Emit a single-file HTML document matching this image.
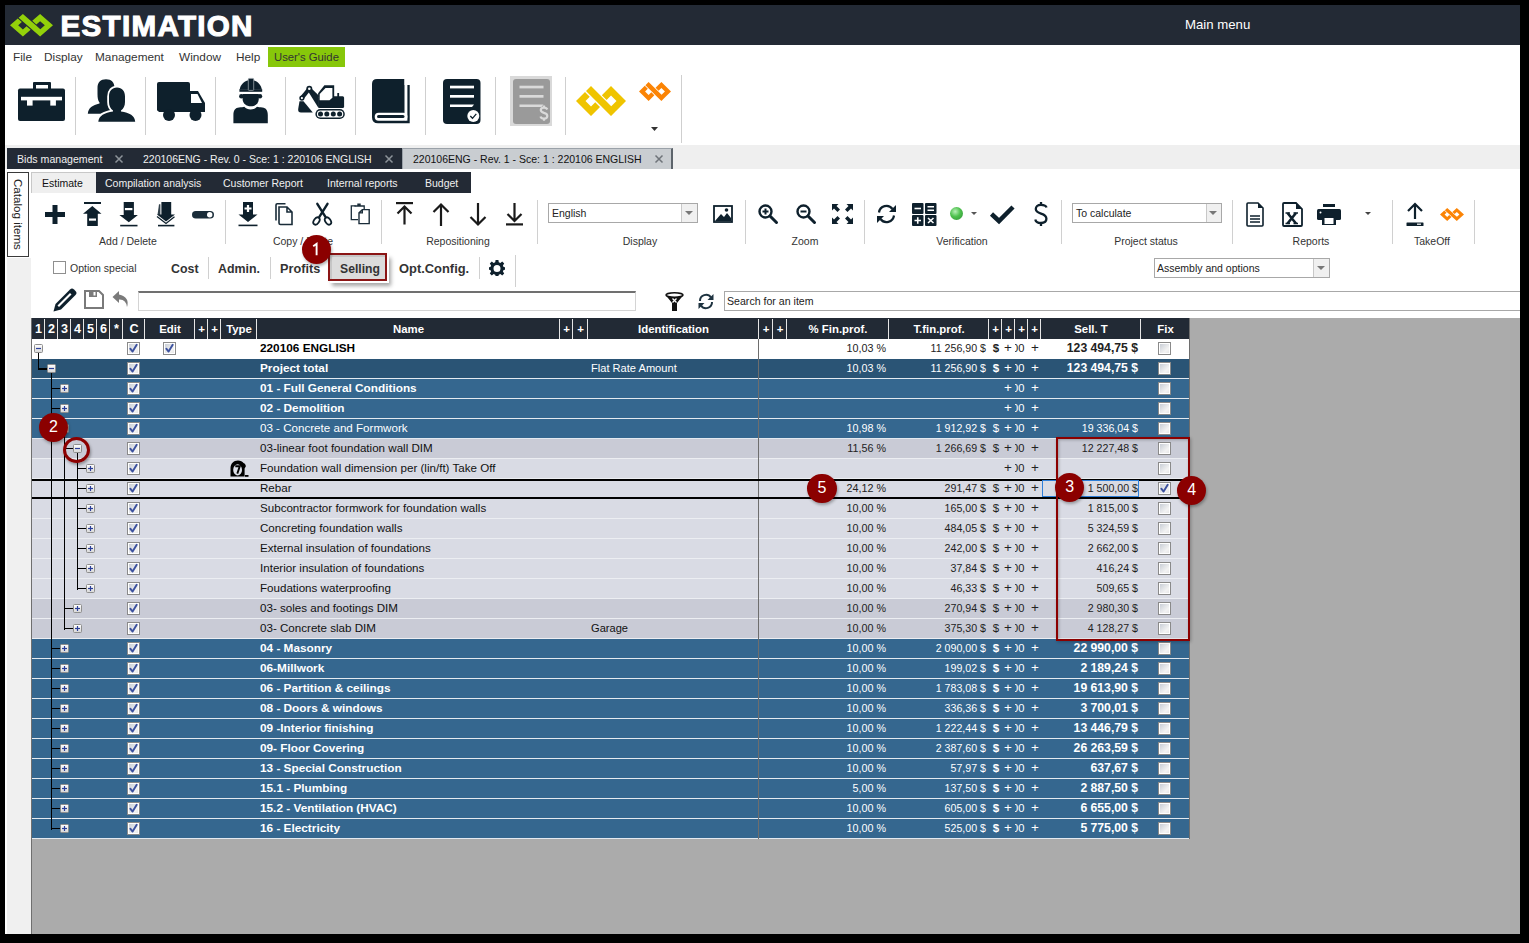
<!DOCTYPE html><html><head><meta charset="utf-8"><style>
html,body{margin:0;padding:0;width:1529px;height:943px;overflow:hidden;background:#000;}
body{position:relative;font-family:"Liberation Sans",sans-serif;}
div{position:absolute;box-sizing:border-box;}
.t{white-space:nowrap;}
</style></head><body>

<div class="" style="left:5px;top:5px;width:1515px;height:929px;background:#fff;"></div>
<div class="" style="left:5px;top:5px;width:1515px;height:40px;background:#232a35;"></div>
<svg style="position:absolute;left:10px;top:14px;overflow:visible;" width="43" height="22.5" viewBox="0 0 50 30" preserveAspectRatio="none"><path fill="#93d10a" d="M24.00 21.00 L19.25 16.25 L15.00 20.50 L9.50 15.00 L13.75 10.75 L9.00 6.00 L0.00 15.00 L15.00 30.00 L24.00 21.00ZM10.00 5.00 L20.00 15.00 L25.00 20.00 L35.00 30.00 L40.00 25.00 L50.00 15.00 L35.00 0.00 L25.85 9.15 L30.60 13.90 L35.00 9.50 L40.50 15.00 L35.25 20.25 L29.75 14.75 L25.00 10.00 L15.00 0.00 L10.00 5.00Z"/></svg>
<div class="t" style="left:60.5px;top:5.5px;font-size:29.6px;font-weight:700;color:#fff;line-height:40px;letter-spacing:1.3px;-webkit-text-stroke:1.1px #fff;">ESTIMATION</div>
<div class="t" style="left:1185px;top:5px;font-size:13.2px;font-weight:400;color:#fff;line-height:40px;">Main menu</div>
<div class="t" style="left:13px;top:47px;font-size:11.8px;font-weight:400;color:#333;line-height:20px;">File</div>
<div class="t" style="left:44px;top:47px;font-size:11.8px;font-weight:400;color:#333;line-height:20px;">Display</div>
<div class="t" style="left:95px;top:47px;font-size:11.8px;font-weight:400;color:#333;line-height:20px;">Management</div>
<div class="t" style="left:179px;top:47px;font-size:11.8px;font-weight:400;color:#333;line-height:20px;">Window</div>
<div class="t" style="left:236px;top:47px;font-size:11.8px;font-weight:400;color:#333;line-height:20px;">Help</div>
<div class="" style="left:268px;top:47px;width:77px;height:20px;background:#87c70a;"></div>
<div class="t" style="left:274px;top:47px;font-size:11.3px;font-weight:400;color:#333;line-height:20px;">User&#x27;s Guide</div>
<div class="" style="left:75px;top:77px;width:1px;height:58px;background:#cfcfcf;"></div>
<div class="" style="left:145px;top:77px;width:1px;height:58px;background:#cfcfcf;"></div>
<div class="" style="left:215px;top:77px;width:1px;height:58px;background:#cfcfcf;"></div>
<div class="" style="left:285px;top:77px;width:1px;height:58px;background:#cfcfcf;"></div>
<div class="" style="left:355px;top:77px;width:1px;height:58px;background:#cfcfcf;"></div>
<div class="" style="left:425px;top:77px;width:1px;height:58px;background:#cfcfcf;"></div>
<div class="" style="left:495px;top:77px;width:1px;height:58px;background:#cfcfcf;"></div>
<div class="" style="left:565px;top:77px;width:1px;height:58px;background:#cfcfcf;"></div>
<div class="" style="left:681px;top:75px;width:1px;height:68px;background:#cfcfcf;"></div>
<svg style="position:absolute;left:18px;top:82px;overflow:visible;" width="47" height="39" viewBox="0 0 47 39"><g fill="#0e202c">
<path d="M15 0 H32 Q33 0 33 1 V7 H30 V3 H18 V7 H15 V1 Q15 0 16 0Z"/>
<rect x="0" y="6.5" width="47" height="32.5" rx="2"/>
</g>
<rect x="3" y="14.8" width="41" height="3.6" fill="#fff"/>
<rect x="9" y="18" width="5.6" height="5.6" fill="#fff"/>
<rect x="32.3" y="18" width="5.6" height="5.6" fill="#fff"/>
</svg>
<svg style="position:absolute;left:87px;top:79px;overflow:visible;" width="49" height="44" viewBox="0 0 49 44"><g fill="#0e202c">
<path d="M19 0.2 C24.5 0.2 27.5 3.5 27.5 9 L27.5 15 C27.5 20 25.5 22.5 23.5 24 L23.5 25 L30 28 L30 34.7 L0.8 34.7 C1.3 29 5.5 26 12.5 24.5 L12.5 23.5 C11 21.5 10.5 19 10.5 15 L10.5 9 C10.5 3.5 13.5 0.2 19 0.2Z"/>
</g>
<path d="M30 8.5 C35 8.5 38 12 38 17.5 L38 23 C38 27 36.5 29.5 34 31.5 L34 32.5 C42.5 33.5 48 37 48.2 42.7 L11.3 42.7 C11.8 37 17.5 33.5 26 32.5 L26 31.5 C23.5 29.5 22 27 22 23 L22 17.5 C22 12 25 8.5 30 8.5Z" fill="#fff" stroke="#fff" stroke-width="3.6"/>
<path d="M30 8.5 C35 8.5 38 12 38 17.5 L38 23 C38 27 36.5 29.5 34 31.5 L34 32.5 C42.5 33.5 48 37 48.2 42.7 L11.3 42.7 C11.8 37 17.5 33.5 26 32.5 L26 31.5 C23.5 29.5 22 27 22 23 L22 17.5 C22 12 25 8.5 30 8.5Z" fill="#0e202c"/></svg>
<svg style="position:absolute;left:157px;top:82px;overflow:visible;" width="49" height="41" viewBox="0 0 49 41"><g fill="#0e202c">
<rect x="0" y="0" width="33" height="29" rx="2"/>
<path d="M32 9 H41 L48 21 V30 H32Z"/>
<path d="M0 24 H48 V30 H2 L0 28Z"/>
<circle cx="12" cy="33.1" r="6"/>
<circle cx="38.5" cy="33.1" r="6"/>
</g>
<path d="M34 12 H40.5 L45 21 H34Z" fill="#fff"/>
</svg>
<svg style="position:absolute;left:233px;top:78px;overflow:visible;" width="36" height="46" viewBox="0 0 36 46"><g fill="#0e202c">
<path d="M6.7 11.6 C7.3 7 10.5 3.5 15.5 2.3 H20.5 C25 3.5 28.2 7 28.8 11.6Z"/>
<rect x="6.4" y="11.2" width="22.8" height="2.6"/>
<circle cx="8.3" cy="18.3" r="2.2"/><circle cx="27" cy="18.3" r="2.2"/>
<path d="M9.6 16 H25.8 V21 C25.8 25.5 22 28.3 17.7 28.3 C13.4 28.3 9.6 25.5 9.6 21Z"/>
<path d="M0.4 45.3 V37 C0.4 32 2.5 30 6 29.6 C8.5 29.3 10 29.1 11.3 28.8 C13 30.6 15 31.4 17.7 31.4 C20.4 31.4 22.4 30.6 24 28.8 C25.3 29.1 27 29.3 29.4 29.6 C33 30 34.8 32.5 34.8 37 V45.3Z"/>
</g>
<rect x="15.3" y="0.4" width="5.4" height="12" rx="0.8" fill="#0e202c" stroke="#9aa3aa" stroke-width="0.8"/>
</svg>
<svg style="position:absolute;left:297px;top:85px;overflow:visible;" width="48" height="35" viewBox="0 0 48 35"><g fill="#0e202c">
<path d="M2.5 16.2 H6.5 L15.8 27.6 H4 Q0.8 27.6 1.2 24 Z"/>
<path d="M3 12 L10.8 2.6 L13.8 5 L6.3 14.4Z"/>
<circle cx="4.9" cy="13.1" r="2.6"/><circle cx="12.3" cy="3.8" r="3"/>
<path d="M10.6 5.5 L14.8 3.8 L21.5 10.2 L21.5 22.9 Z"/>
<path d="M27.4 0.3 H37.2 V12 H21.1 V8.3Z"/>
<rect x="21.1" y="11.2" width="26" height="11.7" rx="1.5"/>
<rect x="40.3" y="8" width="1.8" height="4"/>
<rect x="18.4" y="23.9" width="29.4" height="10.1" rx="5.05"/>
</g>
<path d="M28.5 3 H35.4 V12.8 L32.5 15.2 H22.7 V9.1Z" fill="#fff"/>
<circle cx="4.9" cy="13.1" r="1.1" fill="#fff"/><circle cx="12.3" cy="3.8" r="1.3" fill="#fff"/>
<rect x="19.9" y="25.4" width="26.4" height="7.1" rx="3.55" fill="#fff"/>
<g fill="#0e202c"><circle cx="23.5" cy="29" r="2.5"/><circle cx="29.8" cy="29" r="2.5"/><circle cx="36.3" cy="29" r="2.5"/><circle cx="42.6" cy="29" r="2.5"/></g>
</svg>
<svg style="position:absolute;left:372px;top:79px;overflow:visible;" width="38" height="45" viewBox="0 0 38 45"><path d="M5 0 H32.5 V5.9 H37.7 V44.3 H6 Q0 44.3 0 38.3 V5 Q0 0 5 0Z" fill="#0e202c"/>
<rect x="32.5" y="-1" width="2.9" height="42.7" fill="#fff"/>
<rect x="2.7" y="33.7" width="32.7" height="8" rx="4" fill="#fff"/>
<rect x="5" y="36" width="27.5" height="3.1" rx="1.5" fill="#0e202c"/></svg>
<svg style="position:absolute;left:443px;top:79px;overflow:visible;" width="38" height="45" viewBox="0 0 38 45"><rect x="0" y="0" width="37.5" height="45" rx="4" fill="#0e202c"/>
<g fill="#fff"><rect x="7" y="6.7" width="24" height="2.7"/><rect x="7" y="16" width="24" height="2.7"/><path d="M7 25.5 H31 L29 28 H7Z"/>
<circle cx="30.3" cy="37" r="6"/></g>
<path d="M27.3 37 L29.5 39.3 L33.3 34.8" fill="none" stroke="#0e202c" stroke-width="1.3"/>
</svg>
<div class="" style="left:510px;top:76px;width:42px;height:50px;background:#d9d9d9;"></div>
<svg style="position:absolute;left:513px;top:79px;overflow:visible;" width="37" height="45" viewBox="0 0 37 45"><rect x="0" y="0" width="37" height="45" rx="3" fill="#9a9a9a"/>
<g fill="#dadada"><rect x="6.5" y="6.7" width="24" height="2.7"/><rect x="6.5" y="16" width="24" height="2.7"/><path d="M6.5 25.5 H30.5 L28.5 28 H6.5Z"/></g>
<path d="M34.3 30.5 C33.8 29.2 32.6 28.6 31 28.6 C29 28.6 27.8 29.6 27.8 31.1 C27.8 32.8 29.4 33.4 31 33.9 C32.8 34.4 34.3 35.1 34.3 37 C34.3 38.7 32.9 39.6 31 39.6 C29.2 39.6 27.9 39 27.5 37.5" fill="none" stroke="#dadada" stroke-width="2.2"/><path d="M31 26.6 V28.8 M31 39.4 V41.8" stroke="#dadada" stroke-width="2.2"/>
</svg>
<svg style="position:absolute;left:576px;top:86px;overflow:visible;" width="50" height="30" viewBox="0 0 50 30" preserveAspectRatio="none"><path fill="#efc400" d="M24.00 21.00 L19.25 16.25 L15.00 20.50 L9.50 15.00 L13.75 10.75 L9.00 6.00 L0.00 15.00 L15.00 30.00 L24.00 21.00ZM10.00 5.00 L20.00 15.00 L25.00 20.00 L35.00 30.00 L40.00 25.00 L50.00 15.00 L35.00 0.00 L25.85 9.15 L30.60 13.90 L35.00 9.50 L40.50 15.00 L35.25 20.25 L29.75 14.75 L25.00 10.00 L15.00 0.00 L10.00 5.00Z"/></svg>
<svg style="position:absolute;left:639px;top:82px;overflow:visible;" width="32" height="19" viewBox="0 0 50 30" preserveAspectRatio="none"><path fill="#fb8405" d="M24.00 21.00 L19.25 16.25 L15.00 20.50 L9.50 15.00 L13.75 10.75 L9.00 6.00 L0.00 15.00 L15.00 30.00 L24.00 21.00ZM10.00 5.00 L20.00 15.00 L25.00 20.00 L35.00 30.00 L40.00 25.00 L50.00 15.00 L35.00 0.00 L25.85 9.15 L30.60 13.90 L35.00 9.50 L40.50 15.00 L35.25 20.25 L29.75 14.75 L25.00 10.00 L15.00 0.00 L10.00 5.00Z"/></svg>
<svg style="position:absolute;left:651px;top:127px;overflow:visible;" width="7" height="4" viewBox="0 0 7 4"><path d="M0 0 H7 L3.5 4Z" fill="#333"/></svg>
<div class="" style="left:5px;top:145px;width:1515px;height:24px;background:#efefef;"></div>
<div class="" style="left:7px;top:148px;width:395px;height:21px;background:#232a35;"></div>
<div class="t" style="left:17px;top:149px;font-size:10.6px;font-weight:400;color:#f0f0f0;line-height:21px;">Bids management</div>
<div class="t" style="left:143px;top:149px;font-size:10.5px;font-weight:400;color:#f0f0f0;line-height:21px;">220106ENG - Rev. 0 - Sce: 1 : 220106 ENGLISH</div>
<svg style="position:absolute;left:115px;top:155px;overflow:visible;" width="8" height="8" viewBox="0 0 8 8"><path d="M0.5 0.5 L7.5 7.5 M7.5 0.5 L0.5 7.5" stroke="#8d9399" stroke-width="1.5"/></svg>
<svg style="position:absolute;left:385px;top:155px;overflow:visible;" width="8" height="8" viewBox="0 0 8 8"><path d="M0.5 0.5 L7.5 7.5 M7.5 0.5 L0.5 7.5" stroke="#8d9399" stroke-width="1.5"/></svg>
<div class="" style="left:402px;top:148px;width:271px;height:21px;background:#c9cdd1;border:1px solid #9aa1a8;border-right:2px solid #5d646b;border-bottom:none;"></div>
<div class="t" style="left:413px;top:149px;font-size:10.5px;font-weight:400;color:#111;line-height:21px;">220106ENG - Rev. 1 - Sce: 1 : 220106 ENGLISH</div>
<svg style="position:absolute;left:655px;top:155px;overflow:visible;" width="8" height="8" viewBox="0 0 8 8"><path d="M0.5 0.5 L7.5 7.5 M7.5 0.5 L0.5 7.5" stroke="#6f747a" stroke-width="1.5"/></svg>
<div class="" style="left:5px;top:258px;width:26px;height:676px;background:#f0f0f0;"></div>
<div class="" style="left:5px;top:169px;width:2px;height:765px;background:#fff;"></div>
<div class="" style="left:7px;top:172px;width:22px;height:85px;background:#fff;border:1px solid #3a3a3a;"></div>
<div class="t" style="left:18px;top:172px;width:0;height:0;"><div class="t" style="left:-6px;top:7px;transform-origin:0 0;transform:rotate(90deg) translate(0,-12px);font-size:11.6px;color:#222;line-height:12px;">Catalog items</div></div>
<div class="" style="left:31px;top:172px;width:65px;height:21px;background:#efefef;border-left:1px solid #c8c8c8;border-top:1px solid #c8c8c8;"></div>
<div class="t" style="left:42px;top:173px;font-size:10.5px;font-weight:400;color:#111;line-height:21px;">Estimate</div>
<div class="" style="left:96px;top:172px;width:375px;height:21px;background:#232a35;"></div>
<div class="t" style="left:105px;top:173px;font-size:10.5px;font-weight:400;color:#f0f0f0;line-height:21px;">Compilation analysis</div>
<div class="t" style="left:223px;top:173px;font-size:10.5px;font-weight:400;color:#f0f0f0;line-height:21px;">Customer Report</div>
<div class="t" style="left:327px;top:173px;font-size:10.5px;font-weight:400;color:#f0f0f0;line-height:21px;">Internal reports</div>
<div class="t" style="left:425px;top:173px;font-size:10.5px;font-weight:400;color:#f0f0f0;line-height:21px;">Budget</div>
<svg style="position:absolute;left:45px;top:205px;overflow:visible;" width="20" height="19" viewBox="0 0 20 19"><path d="M7.5 0 H12.5 V7 H20 V12 H12.5 V19 H7.5 V12 H0 V7 H7.5Z" fill="#0e202c"/></svg>
<svg style="position:absolute;left:83px;top:202px;overflow:visible;" width="19" height="24" viewBox="0 0 19 24"><rect x="1" y="0" width="17" height="2" fill="#0e202c"/><path d="M9.3 4 L18.5 11.8 H14.8 V24 H4.2 V11.8 H0Z" fill="#0e202c"/><rect x="6" y="16.5" width="7" height="2.2" fill="#fff"/></svg>
<svg style="position:absolute;left:119px;top:202px;overflow:visible;" width="19" height="24" viewBox="0 0 19 24"><path d="M4.7 0 H14.9 V13 H18.9 L9.8 20.2 L0.4 13 H4.7Z" fill="#0e202c"/><rect x="5.9" y="6" width="7.5" height="2.2" fill="#fff"/><rect x="1.2" y="22.8" width="17.3" height="1.6" fill="#0e202c"/></svg>
<svg style="position:absolute;left:157px;top:202px;overflow:visible;" width="19" height="24" viewBox="0 0 19 24"><path d="M4.4 0 H14.2 V12.5 H18 L9 19.5 L0 12.5 H4.4Z" fill="#0e202c"/><path d="M2 2.3 H3.4 V13 L0.5 13 Z" fill="#0e202c" opacity="0.85"/><path d="M0 14.6 L9 21.5 L17.5 14.8" fill="none" stroke="#0e202c" stroke-width="1.3"/><rect x="1" y="22.8" width="16.4" height="1.6" fill="#0e202c"/></svg>
<svg style="position:absolute;left:192px;top:211px;overflow:visible;" width="22" height="8" viewBox="0 0 22 8"><rect x="0" y="0" width="22" height="7.5" rx="3.75" fill="#1a2c39"/><circle cx="17.7" cy="3.75" r="2.7" fill="#fff"/></svg>
<div class="" style="left:225px;top:200px;width:1px;height:44px;background:#d0d0d0;"></div>
<div class="t" style="left:-72px;width:400px;top:231px;font-size:10.5px;font-weight:400;color:#333;line-height:20px;text-align:center;">Add / Delete</div>
<svg style="position:absolute;left:238px;top:202px;overflow:visible;" width="20" height="24" viewBox="0 0 20 24"><path d="M5 0 H15 V12.5 H19.5 L10 20 L0.5 12.5 H5Z" fill="#0e202c"/><path d="M8.9 3 H11.1 V5.4 H13.5 V7.6 H11.1 V10 H8.9 V7.6 H6.5 V5.4 H8.9Z" fill="#fff"/><rect x="0.5" y="22.6" width="19" height="1.6" fill="#0e202c"/></svg>
<svg style="position:absolute;left:275px;top:203px;overflow:visible;" width="20" height="23" viewBox="0 0 20 23"><path d="M4 4 H12 L17 9 V21.5 H5.5 Q4 21.5 4 20Z M12 4 V9 H17" fill="none" stroke="#1a2c39" stroke-width="1.6"/><path d="M1 17.5 V2 Q1 0.8 2.2 0.8 H10.5" fill="none" stroke="#1a2c39" stroke-width="1.6"/></svg>
<svg style="position:absolute;left:312px;top:203px;overflow:visible;" width="21" height="23" viewBox="0 0 21 23"><path d="M5.3 0.8 L13.6 14.2 M15.5 0.8 L7.2 14.2" stroke="#0e202c" stroke-width="2.4" stroke-linecap="round"/><ellipse cx="4.5" cy="18" rx="2.6" ry="4" transform="rotate(35 4.5 18)" fill="none" stroke="#0e202c" stroke-width="1.8"/><ellipse cx="16" cy="18" rx="2.6" ry="4" transform="rotate(-35 16 18)" fill="none" stroke="#0e202c" stroke-width="1.8"/></svg>
<svg style="position:absolute;left:350px;top:203px;overflow:visible;" width="21" height="22" viewBox="0 0 21 22"><path d="M5.5 2.8 H1.3 V16.6 H8" fill="none" stroke="#1a2c39" stroke-width="1.3"/><path d="M4.5 3.8 V2.2 H7.3 V0.6 H10.7 V2.2 H13 V3.8Z" fill="#1a2c39"/><path d="M13 3 H14.2 V6" fill="none" stroke="#1a2c39" stroke-width="1.3"/><path d="M12.3 6.6 H19.2 V20.6 H9 V9.9Z M9 9.9 H12.3 V6.6" fill="none" stroke="#1a2c39" stroke-width="1.4"/></svg>
<div class="" style="left:381px;top:200px;width:1px;height:44px;background:#d0d0d0;"></div>
<div class="t" style="left:103px;width:400px;top:231px;font-size:10.5px;font-weight:400;color:#333;line-height:20px;text-align:center;">Copy / Paste</div>
<svg style="position:absolute;left:396px;top:202px;overflow:visible;" width="17" height="23" viewBox="0 0 17 23"><path d="M8.5 4.5 V22.5 M1.5 11.5 L8.5 4.5 L15.5 11.5" fill="none" stroke="#1a1a1a" stroke-width="2.2"/><rect x="0" y="0" width="17" height="2.2" fill="#1a1a1a"/></svg>
<svg style="position:absolute;left:432px;top:203px;overflow:visible;" width="18" height="23" viewBox="0 0 18 23"><path d="M9 1.5 V23 M1.5 9 L9 1.5 L16.5 9" fill="none" stroke="#1a1a1a" stroke-width="2.2"/></svg>
<svg style="position:absolute;left:469px;top:203px;overflow:visible;" width="18" height="23" viewBox="0 0 18 23"><path d="M9 0 V21.5 M1.5 14 L9 21.5 L16.5 14" fill="none" stroke="#1a1a1a" stroke-width="2.2"/></svg>
<svg style="position:absolute;left:506px;top:203px;overflow:visible;" width="17" height="23" viewBox="0 0 17 23"><path d="M8.5 0 V18 M1.5 11 L8.5 18 L15.5 11" fill="none" stroke="#1a1a1a" stroke-width="2.2"/><rect x="0" y="20.3" width="17" height="2.2" fill="#1a1a1a"/></svg>
<div class="" style="left:537px;top:200px;width:1px;height:44px;background:#d0d0d0;"></div>
<div class="t" style="left:258px;width:400px;top:231px;font-size:10.5px;font-weight:400;color:#333;line-height:20px;text-align:center;">Repositioning</div>
<div class="" style="left:548px;top:203px;width:150px;height:20px;background:#fff;border:1px solid #a8a8a8;"></div>
<div class="" style="left:681px;top:204px;width:16px;height:18px;background:#f0f0f0;border-left:1px solid #c8c8c8;"></div>
<svg style="position:absolute;left:685px;top:211px;overflow:visible;" width="8" height="4" viewBox="0 0 8 4"><path d="M0 0 H8 L4 4Z" fill="#777"/></svg>
<div class="t" style="left:552px;top:203px;font-size:10.5px;font-weight:400;color:#222;line-height:20px;">English</div>
<svg style="position:absolute;left:713px;top:205px;overflow:visible;" width="20" height="18" viewBox="0 0 20 18"><rect x="1" y="1" width="18" height="16" fill="none" stroke="#0e202c" stroke-width="1.8"/><path d="M2 16 L8 9 L11 12 L14 8 L18 13 V16Z" fill="#0e202c"/><circle cx="13.5" cy="5" r="1.8" fill="#0e202c"/></svg>
<div class="" style="left:745px;top:200px;width:1px;height:44px;background:#d0d0d0;"></div>
<div class="t" style="left:440px;width:400px;top:231px;font-size:10.5px;font-weight:400;color:#333;line-height:20px;text-align:center;">Display</div>
<svg style="position:absolute;left:758px;top:204px;overflow:visible;" width="20" height="20" viewBox="0 0 20 20"><circle cx="7.5" cy="7.5" r="6" fill="none" stroke="#0e202c" stroke-width="2.4"/><path d="M12 12 L18.5 18.5" stroke="#0e202c" stroke-width="3" stroke-linecap="round"/><path d="M4.5 7.5 H10.5" stroke="#0e202c" stroke-width="2"/><path d="M7.5 4.5 V10.5" stroke="#0e202c" stroke-width="2"/></svg>
<svg style="position:absolute;left:796px;top:204px;overflow:visible;" width="20" height="20" viewBox="0 0 20 20"><circle cx="7.5" cy="7.5" r="6" fill="none" stroke="#0e202c" stroke-width="2.4"/><path d="M12 12 L18.5 18.5" stroke="#0e202c" stroke-width="3" stroke-linecap="round"/><path d="M4.5 7.5 H10.5" stroke="#0e202c" stroke-width="2"/></svg>
<svg style="position:absolute;left:832px;top:204px;overflow:visible;" width="21" height="20" viewBox="0 0 21 20"><g fill="#0e202c"><path d="M0 0 H6.5 L4.5 2 L8 5.5 L5.5 8 L2 4.5 L0 6.5Z"/><path d="M21 0 H14.5 L16.5 2 L13 5.5 L15.5 8 L19 4.5 L21 6.5Z"/><path d="M0 20 H6.5 L4.5 18 L8 14.5 L5.5 12 L2 15.5 L0 13.5Z"/><path d="M21 20 H14.5 L16.5 18 L13 14.5 L15.5 12 L19 15.5 L21 13.5Z"/></g></svg>
<div class="" style="left:864px;top:200px;width:1px;height:44px;background:#d0d0d0;"></div>
<div class="t" style="left:605px;width:400px;top:231px;font-size:10.5px;font-weight:400;color:#333;line-height:20px;text-align:center;">Zoom</div>
<svg style="position:absolute;left:876px;top:204px;overflow:visible;" width="21" height="20" viewBox="0 0 21 20"><path d="M3 8.5 A7.5 7.5 0 0 1 16.5 5" fill="none" stroke="#0e202c" stroke-width="2.2"/><path d="M18 11.5 A7.5 7.5 0 0 1 4.5 15" fill="none" stroke="#0e202c" stroke-width="2.2"/><path d="M20 1 V8 H13Z" fill="#0e202c"/><path d="M1 19 V12 H8Z" fill="#0e202c"/></svg>
<svg style="position:absolute;left:912px;top:203px;overflow:visible;" width="25" height="23" viewBox="0 0 25 23"><g fill="#0e202c"><rect x="0" y="0" width="11.5" height="11" rx="1"/><rect x="13" y="0" width="11.5" height="11" rx="1"/><rect x="0" y="12" width="11.5" height="11" rx="1"/><rect x="13" y="12" width="11.5" height="11" rx="1"/></g><g stroke="#fff" stroke-width="1.6"><path d="M2.5 5.5 H9"/><path d="M15.5 3.8 H22 M15.5 7.2 H22"/><path d="M2.5 17.5 H9 M5.75 14.2 V20.8"/><path d="M16 15 L21.5 20 M21.5 15 L16 20"/></g></svg>
<div style="left:950px;top:207px;width:13px;height:13px;border-radius:50%;background:radial-gradient(circle at 40% 35%,#b8f0b8 0%,#4cc04c 45%,#2f8f36 100%);"></div>
<svg style="position:absolute;left:971px;top:212px;overflow:visible;" width="6" height="3" viewBox="0 0 6 3"><path d="M0 0 H6 L3 3Z" fill="#555"/></svg>
<svg style="position:absolute;left:990px;top:205px;overflow:visible;" width="25" height="18" viewBox="0 0 25 18"><path d="M1.5 9 L9 16 L23 2" fill="none" stroke="#0e202c" stroke-width="4.5"/></svg>
<svg style="position:absolute;left:1034px;top:202px;overflow:visible;" width="14" height="24" viewBox="0 0 14 24"><path d="M12.5 5.5 C12 3.5 10 2.8 7 2.8 C3.5 2.8 1.8 4.6 1.8 7 C1.8 9.8 4.5 10.8 7 11.6 C10 12.5 12.4 13.6 12.4 16.8 C12.4 19.6 10 21 7 21 C4 21 1.8 20 1.3 17.5" fill="none" stroke="#0e202c" stroke-width="2.3"/><path d="M7 0 V3 M7 21 V24" stroke="#0e202c" stroke-width="2.3"/></svg>
<div class="" style="left:1061px;top:200px;width:1px;height:44px;background:#d0d0d0;"></div>
<div class="t" style="left:762px;width:400px;top:231px;font-size:10.5px;font-weight:400;color:#333;line-height:20px;text-align:center;">Verification</div>
<div class="" style="left:1072px;top:203px;width:150px;height:20px;background:#fff;border:1px solid #a8a8a8;"></div>
<div class="" style="left:1206px;top:204px;width:15px;height:18px;background:#f0f0f0;border-left:1px solid #c8c8c8;"></div>
<svg style="position:absolute;left:1209px;top:211px;overflow:visible;" width="8" height="4" viewBox="0 0 8 4"><path d="M0 0 H8 L4 4Z" fill="#777"/></svg>
<div class="t" style="left:1076px;top:203px;font-size:10.5px;font-weight:400;color:#222;line-height:20px;">To calculate</div>
<div class="" style="left:1232px;top:200px;width:1px;height:44px;background:#d0d0d0;"></div>
<div class="t" style="left:946px;width:400px;top:231px;font-size:10.5px;font-weight:400;color:#333;line-height:20px;text-align:center;">Project status</div>
<svg style="position:absolute;left:1246px;top:202px;overflow:visible;" width="18" height="25" viewBox="0 0 18 25"><path d="M1 2 Q1 1 2 1 H12 L17 6 V23 Q17 24 16 24 H2 Q1 24 1 23Z" fill="none" stroke="#0e202c" stroke-width="1.6"/><path d="M12 1 V6 H17" fill="#0e202c"/><g stroke="#0e202c" stroke-width="1.3"><path d="M4 14 H14 M4 17 H14 M4 20 H14"/></g></svg>
<svg style="position:absolute;left:1282px;top:202px;overflow:visible;" width="21" height="25" viewBox="0 0 21 25"><path d="M1 2 Q1 1 2 1 H14 L20 7 V23 Q20 24 19 24 H2 Q1 24 1 23Z" fill="none" stroke="#0e202c" stroke-width="1.8"/><path d="M14 1 V7 H20" fill="#0e202c"/><path d="M5.5 11 L14 21.5 M14 11 L5.5 21.5" stroke="#0e202c" stroke-width="2.6"/><path d="M3.5 11 H8 M11.5 11 H16 M3.5 21.5 H8 M11.5 21.5 H16" stroke="#0e202c" stroke-width="1.3"/></svg>
<svg style="position:absolute;left:1317px;top:204px;overflow:visible;" width="24" height="21" viewBox="0 0 24 21"><g fill="#0e202c"><rect x="6" y="0" width="12" height="3"/><rect x="0" y="5" width="24" height="11" rx="1.5"/><rect x="5" y="11" width="14" height="10"/></g><rect x="7.5" y="14" width="9" height="6" fill="#fff"/><circle cx="3.5" cy="8.5" r="1" fill="#fff"/></svg>
<svg style="position:absolute;left:1365px;top:212px;overflow:visible;" width="6" height="3" viewBox="0 0 6 3"><path d="M0 0 H6 L3 3Z" fill="#444"/></svg>
<div class="" style="left:1392px;top:200px;width:1px;height:44px;background:#d0d0d0;"></div>
<div class="t" style="left:1111px;width:400px;top:231px;font-size:10.5px;font-weight:400;color:#333;line-height:20px;text-align:center;">Reports</div>
<svg style="position:absolute;left:1406px;top:202px;overflow:visible;" width="18" height="25" viewBox="0 0 18 25"><path d="M9 2 V17 M2 9 L9 2 L16 9" fill="none" stroke="#0e202c" stroke-width="2.2"/><rect x="0.5" y="20.5" width="17" height="3.5" rx="0.5" fill="#0e202c"/><rect x="11" y="21.6" width="4" height="1.2" fill="#fff"/></svg>
<svg style="position:absolute;left:1440px;top:208px;overflow:visible;" width="24" height="13" viewBox="0 0 50 30" preserveAspectRatio="none"><path fill="#fb8405" d="M24.00 21.00 L19.25 16.25 L15.00 20.50 L9.50 15.00 L13.75 10.75 L9.00 6.00 L0.00 15.00 L15.00 30.00 L24.00 21.00ZM10.00 5.00 L20.00 15.00 L25.00 20.00 L35.00 30.00 L40.00 25.00 L50.00 15.00 L35.00 0.00 L25.85 9.15 L30.60 13.90 L35.00 9.50 L40.50 15.00 L35.25 20.25 L29.75 14.75 L25.00 10.00 L15.00 0.00 L10.00 5.00Z"/></svg>
<div class="" style="left:1474px;top:200px;width:1px;height:44px;background:#d0d0d0;"></div>
<div class="t" style="left:1232px;width:400px;top:231px;font-size:10.5px;font-weight:400;color:#333;line-height:20px;text-align:center;">TakeOff</div>
<div class="" style="left:53px;top:261px;width:13px;height:13px;background:#fff;border:1px solid #8f8f8f;"></div>
<div class="t" style="left:70px;top:258px;font-size:10.5px;font-weight:400;color:#333;line-height:20px;">Option special</div>
<div class="t" style="left:171px;top:259px;font-size:12.4px;font-weight:700;color:#333;line-height:20px;">Cost</div>
<div class="t" style="left:218px;top:259px;font-size:12.4px;font-weight:700;color:#333;line-height:20px;">Admin.</div>
<div class="t" style="left:280px;top:259px;font-size:12.7px;font-weight:700;color:#333;line-height:20px;">Profits</div>
<div class="t" style="left:399px;top:259px;font-size:12.9px;font-weight:700;color:#333;line-height:20px;">Opt.Config.</div>
<div class="" style="left:208px;top:257px;width:1px;height:22px;background:#d0d0d0;"></div>
<div class="" style="left:270px;top:257px;width:1px;height:22px;background:#d0d0d0;"></div>
<div class="" style="left:479px;top:257px;width:1px;height:22px;background:#d0d0d0;"></div>
<div class="" style="left:515px;top:255px;width:1px;height:32px;background:#d0d0d0;"></div>
<div style="left:330px;top:255px;width:59px;height:28px;box-shadow:2px 3px 4px rgba(0,0,0,0.35);"></div>
<div class="" style="left:328px;top:253px;width:59px;height:28px;background:#dcdcdc;border:2px solid #8b1515;box-shadow:inset 2px 2px 0 #c6c6c6;"></div>
<div class="t" style="left:340px;top:259px;font-size:12.2px;font-weight:700;color:#333;line-height:20px;">Selling</div>
<svg style="position:absolute;left:489px;top:260px;overflow:visible;" width="16" height="16" viewBox="0 0 16 16"><path fill="#0e202c" fill-rule="evenodd" d="M6.6 0 H9.4 L9.8 2.2 L11.4 2.9 L13.2 1.6 L15.2 3.6 L13.9 5.4 L14.6 7 L16 7.3 V9.7 L14.6 10 L13.9 11.6 L15.2 13.4 L13.2 15.4 L11.4 14.1 L9.8 14.8 L9.4 16 H6.6 L6.2 14.8 L4.6 14.1 L2.8 15.4 L0.8 13.4 L2.1 11.6 L1.4 10 L0 9.7 V7.3 L1.4 7 L2.1 5.4 L0.8 3.6 L2.8 1.6 L4.6 2.9 L6.2 2.2Z M8 5 A3.5 3.5 0 1 0 8 12 A3.5 3.5 0 1 0 8 5Z"/></svg>
<div class="" style="left:1154px;top:258px;width:176px;height:20px;background:#fff;border:1px solid #a8a8a8;"></div>
<div class="" style="left:1313px;top:259px;width:16px;height:18px;background:#f0f0f0;border-left:1px solid #c8c8c8;"></div>
<svg style="position:absolute;left:1317px;top:266px;overflow:visible;" width="8" height="4" viewBox="0 0 8 4"><path d="M0 0 H8 L4 4Z" fill="#777"/></svg>
<div class="t" style="left:1157px;top:258px;font-size:10.5px;font-weight:400;color:#222;line-height:20px;">Assembly and options</div>
<svg style="position:absolute;left:53px;top:288px;overflow:visible;" width="24" height="24" viewBox="0 0 24 24"><path d="M0.5 23.5 L2.5 16 L17 1.5 Q19 -0.5 21 1.5 L22.5 3 Q24.5 5 22.5 7 L8 21.5Z" fill="#0e202c"/><path d="M4.5 17.5 L17 5 L18.5 6.5 L6 19Z" fill="#fff"/></svg>
<svg style="position:absolute;left:84px;top:290px;overflow:visible;" width="20" height="19" viewBox="0 0 20 19"><path d="M1 1 H15 L19 5 V18 H1Z" fill="none" stroke="#7a7a7a" stroke-width="2"/><rect x="5" y="1" width="8" height="6" fill="#7a7a7a"/><rect x="9.5" y="2" width="2" height="3.5" fill="#fff"/></svg>
<svg style="position:absolute;left:112px;top:290px;overflow:visible;" width="18" height="19" viewBox="0 0 18 19"><path d="M7 1 L0.5 7 L7 13 V9.5 Q14 9 15 17 Q18 7 7 4.5Z" fill="#7a7a7a"/></svg>
<div class="" style="left:138px;top:291px;width:498px;height:20px;background:#fff;border:1px solid #d4d4d4;border-top:2px solid #707070;"></div>
<svg style="position:absolute;left:665px;top:292px;overflow:visible;" width="19" height="19" viewBox="0 0 19 19"><ellipse cx="9.5" cy="3" rx="8.5" ry="2.2" fill="none" stroke="#111" stroke-width="1.5"/><path d="M1 3.5 Q3 5 9.5 5.3 Q16 5 18 3.5 L12 11 V19 H7 V11Z" fill="#111"/><path d="M7.5 6.5 L11.5 10.5 M11.5 6.5 L7.5 10.5" stroke="#fff" stroke-width="1.3"/></svg>
<svg style="position:absolute;left:698px;top:293px;overflow:visible;" width="16" height="17" viewBox="0 0 16 17"><path d="M2 8 A6 6 0 0 1 13 4.5" fill="none" stroke="#1e3340" stroke-width="2"/><path d="M14 9 A6 6 0 0 1 3 12.5" fill="none" stroke="#1e3340" stroke-width="2"/><path d="M15.5 1 V7 H9.5Z" fill="#1e3340"/><path d="M0.5 16 V10 H6.5Z" fill="#1e3340"/></svg>
<div class="" style="left:724px;top:291px;width:796px;height:20px;background:#fff;border:1px solid #a8a8a8;border-right:none;"></div>
<div class="t" style="left:727px;top:291px;font-size:10.6px;font-weight:400;color:#222;line-height:20px;">Search for an item</div>
<div class="" style="left:31px;top:313px;width:1489px;height:621px;background:#ababab;"></div>
<div class="" style="left:31px;top:313px;width:1489px;height:5px;background:#fff;"></div>
<div class="" style="left:31px;top:318px;width:1px;height:616px;background:#6f6f6f;"></div>
<div class="" style="left:32px;top:318px;width:1157px;height:21px;background:#222a35;"></div>
<div class="" style="left:44px;top:319px;width:1px;height:20px;background:#e6e6e6;"></div>
<div class="" style="left:57px;top:319px;width:1px;height:20px;background:#e6e6e6;"></div>
<div class="" style="left:70px;top:319px;width:1px;height:20px;background:#e6e6e6;"></div>
<div class="" style="left:83px;top:319px;width:1px;height:20px;background:#e6e6e6;"></div>
<div class="" style="left:96px;top:319px;width:1px;height:20px;background:#e6e6e6;"></div>
<div class="" style="left:109px;top:319px;width:1px;height:20px;background:#e6e6e6;"></div>
<div class="" style="left:122px;top:319px;width:1px;height:20px;background:#e6e6e6;"></div>
<div class="" style="left:144px;top:319px;width:1px;height:20px;background:#e6e6e6;"></div>
<div class="" style="left:194px;top:319px;width:1px;height:20px;background:#e6e6e6;"></div>
<div class="" style="left:207px;top:319px;width:1px;height:20px;background:#e6e6e6;"></div>
<div class="" style="left:220px;top:319px;width:1px;height:20px;background:#e6e6e6;"></div>
<div class="" style="left:256px;top:319px;width:1px;height:20px;background:#e6e6e6;"></div>
<div class="" style="left:559px;top:319px;width:1px;height:20px;background:#e6e6e6;"></div>
<div class="" style="left:572px;top:319px;width:1px;height:20px;background:#e6e6e6;"></div>
<div class="" style="left:587px;top:319px;width:1px;height:20px;background:#e6e6e6;"></div>
<div class="" style="left:758px;top:319px;width:1px;height:20px;background:#e6e6e6;"></div>
<div class="" style="left:772px;top:319px;width:1px;height:20px;background:#e6e6e6;"></div>
<div class="" style="left:786px;top:319px;width:1px;height:20px;background:#e6e6e6;"></div>
<div class="" style="left:888px;top:319px;width:1px;height:20px;background:#e6e6e6;"></div>
<div class="" style="left:988px;top:319px;width:1px;height:20px;background:#e6e6e6;"></div>
<div class="" style="left:1001px;top:319px;width:1px;height:20px;background:#e6e6e6;"></div>
<div class="" style="left:1014px;top:319px;width:1px;height:20px;background:#e6e6e6;"></div>
<div class="" style="left:1027px;top:319px;width:1px;height:20px;background:#e6e6e6;"></div>
<div class="" style="left:1040px;top:319px;width:1px;height:20px;background:#e6e6e6;"></div>
<div class="" style="left:1140px;top:319px;width:1px;height:20px;background:#e6e6e6;"></div>
<div class="t" style="left:-161.5px;width:400px;top:318.5px;font-size:12.6px;font-weight:700;color:#fff;line-height:21px;text-align:center;">1</div>
<div class="t" style="left:-148.5px;width:400px;top:318.5px;font-size:12.6px;font-weight:700;color:#fff;line-height:21px;text-align:center;">2</div>
<div class="t" style="left:-135.5px;width:400px;top:318.5px;font-size:12.6px;font-weight:700;color:#fff;line-height:21px;text-align:center;">3</div>
<div class="t" style="left:-122.5px;width:400px;top:318.5px;font-size:12.6px;font-weight:700;color:#fff;line-height:21px;text-align:center;">4</div>
<div class="t" style="left:-109.5px;width:400px;top:318.5px;font-size:12.6px;font-weight:700;color:#fff;line-height:21px;text-align:center;">5</div>
<div class="t" style="left:-96.5px;width:400px;top:318.5px;font-size:12.6px;font-weight:700;color:#fff;line-height:21px;text-align:center;">6</div>
<div class="t" style="left:-83.5px;width:400px;top:318.5px;font-size:12.6px;font-weight:700;color:#fff;line-height:21px;text-align:center;">*</div>
<div class="t" style="left:-66.0px;width:400px;top:318.5px;font-size:12.6px;font-weight:700;color:#fff;line-height:21px;text-align:center;">C</div>
<div class="t" style="left:-30.0px;width:400px;top:318.5px;font-size:11.4px;font-weight:700;color:#fff;line-height:21px;text-align:center;">Edit</div>
<div class="t" style="left:1.5px;width:400px;top:318.5px;font-size:11.5px;font-weight:700;color:#fff;line-height:21px;text-align:center;">+</div>
<div class="t" style="left:14.5px;width:400px;top:318.5px;font-size:11.5px;font-weight:700;color:#fff;line-height:21px;text-align:center;">+</div>
<div class="t" style="left:39.0px;width:400px;top:318.5px;font-size:11.4px;font-weight:700;color:#fff;line-height:21px;text-align:center;">Type</div>
<div class="t" style="left:208.5px;width:400px;top:318.5px;font-size:11.4px;font-weight:700;color:#fff;line-height:21px;text-align:center;">Name</div>
<div class="t" style="left:366.5px;width:400px;top:318.5px;font-size:11.5px;font-weight:700;color:#fff;line-height:21px;text-align:center;">+</div>
<div class="t" style="left:380.5px;width:400px;top:318.5px;font-size:11.5px;font-weight:700;color:#fff;line-height:21px;text-align:center;">+</div>
<div class="t" style="left:473.5px;width:400px;top:318.5px;font-size:11.4px;font-weight:700;color:#fff;line-height:21px;text-align:center;">Identification</div>
<div class="t" style="left:566.0px;width:400px;top:318.5px;font-size:11.5px;font-weight:700;color:#fff;line-height:21px;text-align:center;">+</div>
<div class="t" style="left:580.0px;width:400px;top:318.5px;font-size:11.5px;font-weight:700;color:#fff;line-height:21px;text-align:center;">+</div>
<div class="t" style="left:638.0px;width:400px;top:318.5px;font-size:11.4px;font-weight:700;color:#fff;line-height:21px;text-align:center;">% Fin.prof.</div>
<div class="t" style="left:739.0px;width:400px;top:318.5px;font-size:11.4px;font-weight:700;color:#fff;line-height:21px;text-align:center;">T.fin.prof.</div>
<div class="t" style="left:795.5px;width:400px;top:318.5px;font-size:11.5px;font-weight:700;color:#fff;line-height:21px;text-align:center;">+</div>
<div class="t" style="left:808.5px;width:400px;top:318.5px;font-size:11.5px;font-weight:700;color:#fff;line-height:21px;text-align:center;">+</div>
<div class="t" style="left:821.5px;width:400px;top:318.5px;font-size:11.5px;font-weight:700;color:#fff;line-height:21px;text-align:center;">+</div>
<div class="t" style="left:834.5px;width:400px;top:318.5px;font-size:11.5px;font-weight:700;color:#fff;line-height:21px;text-align:center;">+</div>
<div class="t" style="left:891.0px;width:400px;top:318.5px;font-size:11.4px;font-weight:700;color:#fff;line-height:21px;text-align:center;">Sell. T</div>
<div class="t" style="left:965.5px;width:400px;top:318.5px;font-size:11.4px;font-weight:700;color:#fff;line-height:21px;text-align:center;">Fix</div>
<svg width="0" height="0" style="position:absolute"><defs><linearGradient id="cbg" x1="0" y1="0" x2="1" y2="1"><stop offset="0" stop-color="#c9ced6"/><stop offset="0.7" stop-color="#f3f3f3"/><stop offset="1" stop-color="#e8e8e8"/></linearGradient><linearGradient id="pbg" x1="0" y1="0" x2="0" y2="1"><stop offset="0" stop-color="#ffffff"/><stop offset="1" stop-color="#d8d8d8"/></linearGradient></defs></svg>
<div class="" style="left:32px;top:339px;width:1157px;height:19px;background:#fff;"></div>
<div class="" style="left:32px;top:358px;width:1157px;height:1px;background:#ffffff;"></div>
<div class="" style="left:32px;top:359px;width:1157px;height:19px;background:#2a5475;"></div>
<div class="" style="left:32px;top:378px;width:1157px;height:1px;background:#e4eaf0;"></div>
<div class="" style="left:32px;top:379px;width:1157px;height:19px;background:#35678f;"></div>
<div class="" style="left:32px;top:398px;width:1157px;height:1px;background:#e4eaf0;"></div>
<div class="" style="left:32px;top:399px;width:1157px;height:19px;background:#35678f;"></div>
<div class="" style="left:32px;top:418px;width:1157px;height:1px;background:#e4eaf0;"></div>
<div class="" style="left:32px;top:419px;width:1157px;height:19px;background:#35678f;"></div>
<div class="" style="left:32px;top:438px;width:1157px;height:1px;background:#e4eaf0;"></div>
<div class="" style="left:32px;top:439px;width:1157px;height:19px;background:#c9cbd6;"></div>
<div class="" style="left:32px;top:458px;width:1157px;height:1px;background:#eceef2;"></div>
<div class="" style="left:32px;top:459px;width:1157px;height:19px;background:#d9dbe4;"></div>
<div class="" style="left:32px;top:478px;width:1157px;height:1px;background:#eceef2;"></div>
<div class="" style="left:32px;top:479px;width:1157px;height:19px;background:#d9dbe4;"></div>
<div class="" style="left:32px;top:498px;width:1157px;height:1px;background:#eceef2;"></div>
<div class="" style="left:32px;top:499px;width:1157px;height:19px;background:#d9dbe4;"></div>
<div class="" style="left:32px;top:518px;width:1157px;height:1px;background:#eceef2;"></div>
<div class="" style="left:32px;top:519px;width:1157px;height:19px;background:#d9dbe4;"></div>
<div class="" style="left:32px;top:538px;width:1157px;height:1px;background:#eceef2;"></div>
<div class="" style="left:32px;top:539px;width:1157px;height:19px;background:#d9dbe4;"></div>
<div class="" style="left:32px;top:558px;width:1157px;height:1px;background:#eceef2;"></div>
<div class="" style="left:32px;top:559px;width:1157px;height:19px;background:#d9dbe4;"></div>
<div class="" style="left:32px;top:578px;width:1157px;height:1px;background:#eceef2;"></div>
<div class="" style="left:32px;top:579px;width:1157px;height:19px;background:#d9dbe4;"></div>
<div class="" style="left:32px;top:598px;width:1157px;height:1px;background:#eceef2;"></div>
<div class="" style="left:32px;top:599px;width:1157px;height:19px;background:#c9cbd6;"></div>
<div class="" style="left:32px;top:618px;width:1157px;height:1px;background:#eceef2;"></div>
<div class="" style="left:32px;top:619px;width:1157px;height:19px;background:#c9cbd6;"></div>
<div class="" style="left:32px;top:638px;width:1157px;height:1px;background:#eceef2;"></div>
<div class="" style="left:32px;top:639px;width:1157px;height:19px;background:#35678f;"></div>
<div class="" style="left:32px;top:658px;width:1157px;height:1px;background:#e4eaf0;"></div>
<div class="" style="left:32px;top:659px;width:1157px;height:19px;background:#35678f;"></div>
<div class="" style="left:32px;top:678px;width:1157px;height:1px;background:#e4eaf0;"></div>
<div class="" style="left:32px;top:679px;width:1157px;height:19px;background:#35678f;"></div>
<div class="" style="left:32px;top:698px;width:1157px;height:1px;background:#e4eaf0;"></div>
<div class="" style="left:32px;top:699px;width:1157px;height:19px;background:#35678f;"></div>
<div class="" style="left:32px;top:718px;width:1157px;height:1px;background:#e4eaf0;"></div>
<div class="" style="left:32px;top:719px;width:1157px;height:19px;background:#35678f;"></div>
<div class="" style="left:32px;top:738px;width:1157px;height:1px;background:#e4eaf0;"></div>
<div class="" style="left:32px;top:739px;width:1157px;height:19px;background:#35678f;"></div>
<div class="" style="left:32px;top:758px;width:1157px;height:1px;background:#e4eaf0;"></div>
<div class="" style="left:32px;top:759px;width:1157px;height:19px;background:#35678f;"></div>
<div class="" style="left:32px;top:778px;width:1157px;height:1px;background:#e4eaf0;"></div>
<div class="" style="left:32px;top:779px;width:1157px;height:19px;background:#35678f;"></div>
<div class="" style="left:32px;top:798px;width:1157px;height:1px;background:#e4eaf0;"></div>
<div class="" style="left:32px;top:799px;width:1157px;height:19px;background:#35678f;"></div>
<div class="" style="left:32px;top:818px;width:1157px;height:1px;background:#e4eaf0;"></div>
<div class="" style="left:32px;top:819px;width:1157px;height:19px;background:#35678f;"></div>
<div class="" style="left:32px;top:838px;width:1157px;height:1px;background:#e4eaf0;"></div>
<svg style="position:absolute;left:127px;top:342px;overflow:visible;" width="13" height="13" viewBox="0 0 13 13"><rect x="0.5" y="0.5" width="12" height="12" fill="#fff" stroke="#8a8a8a"/><defs></defs><rect x="2" y="2" width="9" height="9" fill="url(#cbg)"/><path d="M3.3 6.7 L5.6 9.6 L9.7 2.8" fill="none" stroke="#3c519e" stroke-width="1.9" stroke-linecap="round" stroke-linejoin="round"/></svg>
<svg style="position:absolute;left:163px;top:342px;overflow:visible;" width="13" height="13" viewBox="0 0 13 13"><rect x="0.5" y="0.5" width="12" height="12" fill="#fff" stroke="#8a8a8a"/><defs></defs><rect x="2" y="2" width="9" height="9" fill="url(#cbg)"/><path d="M3.3 6.7 L5.6 9.6 L9.7 2.8" fill="none" stroke="#3c519e" stroke-width="1.9" stroke-linecap="round" stroke-linejoin="round"/></svg>
<svg style="position:absolute;left:1158px;top:342px;overflow:visible;" width="13" height="13" viewBox="0 0 13 13"><rect x="0.5" y="0.5" width="12" height="12" fill="#fff" stroke="#8a8a8a"/><defs></defs><rect x="2" y="2" width="9" height="9" fill="url(#cbg)"/></svg>
<div class="t" style="left:260px;top:337.8px;font-size:11.8px;font-weight:700;color:#000;line-height:20px;">220106 ENGLISH</div>
<div class="t" style="right:643px;top:337.8px;font-size:10.75px;font-weight:400;color:#222;line-height:20px;text-align:right;">10,03 %</div>
<div class="t" style="right:543px;top:337.8px;font-size:10.65px;font-weight:400;color:#222;line-height:20px;text-align:right;">11 256,90 $</div>
<div class="t" style="left:796px;width:400px;top:337.8px;font-size:11.5px;font-weight:700;color:#222;line-height:20px;text-align:center;">$</div>
<div class="t" style="left:1004px;top:337.8px;font-size:13.5px;font-weight:400;color:#222;line-height:20px;">+</div>
<div style="left:1015px;top:339px;width:12px;height:20px;overflow:hidden;"><div class="t" style="left:-3px;top:-1.2px;font-size:11.2px;color:#222;line-height:20px;">00</div></div>
<div class="t" style="left:1031px;top:337.8px;font-size:13.5px;font-weight:400;color:#222;line-height:20px;">+</div>
<div class="t" style="right:391px;top:337.8px;font-size:12.2px;font-weight:700;color:#222;line-height:20px;text-align:right;">123 494,75 $</div>
<svg style="position:absolute;left:127px;top:362px;overflow:visible;" width="13" height="13" viewBox="0 0 13 13"><rect x="0.5" y="0.5" width="12" height="12" fill="#fff" stroke="#8a8a8a"/><defs></defs><rect x="2" y="2" width="9" height="9" fill="url(#cbg)"/><path d="M3.3 6.7 L5.6 9.6 L9.7 2.8" fill="none" stroke="#3c519e" stroke-width="1.9" stroke-linecap="round" stroke-linejoin="round"/></svg>
<svg style="position:absolute;left:1158px;top:362px;overflow:visible;" width="13" height="13" viewBox="0 0 13 13"><rect x="0.5" y="0.5" width="12" height="12" fill="#fff" stroke="#8a8a8a"/><defs></defs><rect x="2" y="2" width="9" height="9" fill="url(#cbg)"/></svg>
<div class="t" style="left:260px;top:357.8px;font-size:11.8px;font-weight:700;color:#fff;line-height:20px;">Project total</div>
<div class="t" style="left:591px;top:357.8px;font-size:11.1px;font-weight:400;color:#fff;line-height:20px;">Flat Rate Amount</div>
<div class="t" style="right:643px;top:357.8px;font-size:10.75px;font-weight:400;color:#fff;line-height:20px;text-align:right;">10,03 %</div>
<div class="t" style="right:543px;top:357.8px;font-size:10.65px;font-weight:400;color:#fff;line-height:20px;text-align:right;">11 256,90 $</div>
<div class="t" style="left:796px;width:400px;top:357.8px;font-size:11.5px;font-weight:700;color:#fff;line-height:20px;text-align:center;">$</div>
<div class="t" style="left:1004px;top:357.8px;font-size:13.5px;font-weight:400;color:#fff;line-height:20px;">+</div>
<div style="left:1015px;top:359px;width:12px;height:20px;overflow:hidden;"><div class="t" style="left:-3px;top:-1.2px;font-size:11.2px;color:#fff;line-height:20px;">00</div></div>
<div class="t" style="left:1031px;top:357.8px;font-size:13.5px;font-weight:400;color:#fff;line-height:20px;">+</div>
<div class="t" style="right:391px;top:357.8px;font-size:12.2px;font-weight:700;color:#fff;line-height:20px;text-align:right;">123 494,75 $</div>
<svg style="position:absolute;left:127px;top:382px;overflow:visible;" width="13" height="13" viewBox="0 0 13 13"><rect x="0.5" y="0.5" width="12" height="12" fill="#fff" stroke="#8a8a8a"/><defs></defs><rect x="2" y="2" width="9" height="9" fill="url(#cbg)"/><path d="M3.3 6.7 L5.6 9.6 L9.7 2.8" fill="none" stroke="#3c519e" stroke-width="1.9" stroke-linecap="round" stroke-linejoin="round"/></svg>
<svg style="position:absolute;left:1158px;top:382px;overflow:visible;" width="13" height="13" viewBox="0 0 13 13"><rect x="0.5" y="0.5" width="12" height="12" fill="#fff" stroke="#8a8a8a"/><defs></defs><rect x="2" y="2" width="9" height="9" fill="url(#cbg)"/></svg>
<div class="t" style="left:260px;top:377.8px;font-size:11.8px;font-weight:700;color:#fff;line-height:20px;">01 - Full General Conditions</div>
<div class="t" style="left:1004px;top:377.8px;font-size:13.5px;font-weight:400;color:#fff;line-height:20px;">+</div>
<div style="left:1015px;top:379px;width:12px;height:20px;overflow:hidden;"><div class="t" style="left:-3px;top:-1.2px;font-size:11.2px;color:#fff;line-height:20px;">00</div></div>
<div class="t" style="left:1031px;top:377.8px;font-size:13.5px;font-weight:400;color:#fff;line-height:20px;">+</div>
<svg style="position:absolute;left:127px;top:402px;overflow:visible;" width="13" height="13" viewBox="0 0 13 13"><rect x="0.5" y="0.5" width="12" height="12" fill="#fff" stroke="#8a8a8a"/><defs></defs><rect x="2" y="2" width="9" height="9" fill="url(#cbg)"/><path d="M3.3 6.7 L5.6 9.6 L9.7 2.8" fill="none" stroke="#3c519e" stroke-width="1.9" stroke-linecap="round" stroke-linejoin="round"/></svg>
<svg style="position:absolute;left:1158px;top:402px;overflow:visible;" width="13" height="13" viewBox="0 0 13 13"><rect x="0.5" y="0.5" width="12" height="12" fill="#fff" stroke="#8a8a8a"/><defs></defs><rect x="2" y="2" width="9" height="9" fill="url(#cbg)"/></svg>
<div class="t" style="left:260px;top:397.8px;font-size:11.8px;font-weight:700;color:#fff;line-height:20px;">02 - Demolition</div>
<div class="t" style="left:1004px;top:397.8px;font-size:13.5px;font-weight:400;color:#fff;line-height:20px;">+</div>
<div style="left:1015px;top:399px;width:12px;height:20px;overflow:hidden;"><div class="t" style="left:-3px;top:-1.2px;font-size:11.2px;color:#fff;line-height:20px;">00</div></div>
<div class="t" style="left:1031px;top:397.8px;font-size:13.5px;font-weight:400;color:#fff;line-height:20px;">+</div>
<svg style="position:absolute;left:127px;top:422px;overflow:visible;" width="13" height="13" viewBox="0 0 13 13"><rect x="0.5" y="0.5" width="12" height="12" fill="#fff" stroke="#8a8a8a"/><defs></defs><rect x="2" y="2" width="9" height="9" fill="url(#cbg)"/><path d="M3.3 6.7 L5.6 9.6 L9.7 2.8" fill="none" stroke="#3c519e" stroke-width="1.9" stroke-linecap="round" stroke-linejoin="round"/></svg>
<svg style="position:absolute;left:1158px;top:422px;overflow:visible;" width="13" height="13" viewBox="0 0 13 13"><rect x="0.5" y="0.5" width="12" height="12" fill="#fff" stroke="#8a8a8a"/><defs></defs><rect x="2" y="2" width="9" height="9" fill="url(#cbg)"/></svg>
<div class="t" style="left:260px;top:417.8px;font-size:11.6px;font-weight:400;color:#fff;line-height:20px;">03 - Concrete and Formwork</div>
<div class="t" style="right:643px;top:417.8px;font-size:10.75px;font-weight:400;color:#fff;line-height:20px;text-align:right;">10,98 %</div>
<div class="t" style="right:543px;top:417.8px;font-size:10.65px;font-weight:400;color:#fff;line-height:20px;text-align:right;">1 912,92 $</div>
<div class="t" style="left:796px;width:400px;top:417.8px;font-size:11.5px;font-weight:400;color:#fff;line-height:20px;text-align:center;">$</div>
<div class="t" style="left:1004px;top:417.8px;font-size:13.5px;font-weight:400;color:#fff;line-height:20px;">+</div>
<div style="left:1015px;top:419px;width:12px;height:20px;overflow:hidden;"><div class="t" style="left:-3px;top:-1.2px;font-size:11.2px;color:#fff;line-height:20px;">00</div></div>
<div class="t" style="left:1031px;top:417.8px;font-size:13.5px;font-weight:400;color:#fff;line-height:20px;">+</div>
<div class="t" style="right:391px;top:417.8px;font-size:10.65px;font-weight:400;color:#fff;line-height:20px;text-align:right;">19 336,04 $</div>
<svg style="position:absolute;left:127px;top:442px;overflow:visible;" width="13" height="13" viewBox="0 0 13 13"><rect x="0.5" y="0.5" width="12" height="12" fill="#fff" stroke="#8a8a8a"/><defs></defs><rect x="2" y="2" width="9" height="9" fill="url(#cbg)"/><path d="M3.3 6.7 L5.6 9.6 L9.7 2.8" fill="none" stroke="#3c519e" stroke-width="1.9" stroke-linecap="round" stroke-linejoin="round"/></svg>
<svg style="position:absolute;left:1158px;top:442px;overflow:visible;" width="13" height="13" viewBox="0 0 13 13"><rect x="0.5" y="0.5" width="12" height="12" fill="#fff" stroke="#8a8a8a"/><defs></defs><rect x="2" y="2" width="9" height="9" fill="url(#cbg)"/></svg>
<div class="t" style="left:260px;top:437.8px;font-size:11.6px;font-weight:400;color:#111;line-height:20px;">03-linear foot foundation wall DIM</div>
<div class="t" style="right:643px;top:437.8px;font-size:10.75px;font-weight:400;color:#222;line-height:20px;text-align:right;">11,56 %</div>
<div class="t" style="right:543px;top:437.8px;font-size:10.65px;font-weight:400;color:#222;line-height:20px;text-align:right;">1 266,69 $</div>
<div class="t" style="left:796px;width:400px;top:437.8px;font-size:11.5px;font-weight:400;color:#222;line-height:20px;text-align:center;">$</div>
<div class="t" style="left:1004px;top:437.8px;font-size:13.5px;font-weight:400;color:#222;line-height:20px;">+</div>
<div style="left:1015px;top:439px;width:12px;height:20px;overflow:hidden;"><div class="t" style="left:-3px;top:-1.2px;font-size:11.2px;color:#222;line-height:20px;">00</div></div>
<div class="t" style="left:1031px;top:437.8px;font-size:13.5px;font-weight:400;color:#222;line-height:20px;">+</div>
<div class="t" style="right:391px;top:437.8px;font-size:10.65px;font-weight:400;color:#222;line-height:20px;text-align:right;">12 227,48 $</div>
<svg style="position:absolute;left:127px;top:462px;overflow:visible;" width="13" height="13" viewBox="0 0 13 13"><rect x="0.5" y="0.5" width="12" height="12" fill="#fff" stroke="#8a8a8a"/><defs></defs><rect x="2" y="2" width="9" height="9" fill="url(#cbg)"/><path d="M3.3 6.7 L5.6 9.6 L9.7 2.8" fill="none" stroke="#3c519e" stroke-width="1.9" stroke-linecap="round" stroke-linejoin="round"/></svg>
<svg style="position:absolute;left:1158px;top:462px;overflow:visible;" width="13" height="13" viewBox="0 0 13 13"><rect x="0.5" y="0.5" width="12" height="12" fill="#fff" stroke="#8a8a8a"/><defs></defs><rect x="2" y="2" width="9" height="9" fill="url(#cbg)"/></svg>
<div class="t" style="left:260px;top:457.8px;font-size:11.6px;font-weight:400;color:#111;line-height:20px;">Foundation wall dimension per (lin/ft) Take Off</div>
<div class="t" style="left:1004px;top:457.8px;font-size:13.5px;font-weight:400;color:#222;line-height:20px;">+</div>
<div style="left:1015px;top:459px;width:12px;height:20px;overflow:hidden;"><div class="t" style="left:-3px;top:-1.2px;font-size:11.2px;color:#222;line-height:20px;">00</div></div>
<div class="t" style="left:1031px;top:457.8px;font-size:13.5px;font-weight:400;color:#222;line-height:20px;">+</div>
<svg style="position:absolute;left:127px;top:482px;overflow:visible;" width="13" height="13" viewBox="0 0 13 13"><rect x="0.5" y="0.5" width="12" height="12" fill="#fff" stroke="#8a8a8a"/><defs></defs><rect x="2" y="2" width="9" height="9" fill="url(#cbg)"/><path d="M3.3 6.7 L5.6 9.6 L9.7 2.8" fill="none" stroke="#3c519e" stroke-width="1.9" stroke-linecap="round" stroke-linejoin="round"/></svg>
<svg style="position:absolute;left:1158px;top:482px;overflow:visible;" width="13" height="13" viewBox="0 0 13 13"><rect x="0.5" y="0.5" width="12" height="12" fill="#fff" stroke="#8a8a8a"/><defs></defs><rect x="2" y="2" width="9" height="9" fill="url(#cbg)"/><path d="M3.3 6.7 L5.6 9.6 L9.7 2.8" fill="none" stroke="#3c519e" stroke-width="1.9" stroke-linecap="round" stroke-linejoin="round"/></svg>
<div class="t" style="left:260px;top:477.8px;font-size:11.6px;font-weight:400;color:#111;line-height:20px;">Rebar</div>
<div class="t" style="right:643px;top:477.8px;font-size:10.75px;font-weight:400;color:#222;line-height:20px;text-align:right;">24,12 %</div>
<div class="t" style="right:543px;top:477.8px;font-size:10.65px;font-weight:400;color:#222;line-height:20px;text-align:right;">291,47 $</div>
<div class="t" style="left:796px;width:400px;top:477.8px;font-size:11.5px;font-weight:400;color:#222;line-height:20px;text-align:center;">$</div>
<div class="t" style="left:1004px;top:477.8px;font-size:13.5px;font-weight:400;color:#222;line-height:20px;">+</div>
<div style="left:1015px;top:479px;width:12px;height:20px;overflow:hidden;"><div class="t" style="left:-3px;top:-1.2px;font-size:11.2px;color:#222;line-height:20px;">00</div></div>
<div class="t" style="left:1031px;top:477.8px;font-size:13.5px;font-weight:400;color:#222;line-height:20px;">+</div>
<div class="t" style="right:391px;top:477.8px;font-size:10.65px;font-weight:400;color:#222;line-height:20px;text-align:right;">1 500,00 $</div>
<svg style="position:absolute;left:127px;top:502px;overflow:visible;" width="13" height="13" viewBox="0 0 13 13"><rect x="0.5" y="0.5" width="12" height="12" fill="#fff" stroke="#8a8a8a"/><defs></defs><rect x="2" y="2" width="9" height="9" fill="url(#cbg)"/><path d="M3.3 6.7 L5.6 9.6 L9.7 2.8" fill="none" stroke="#3c519e" stroke-width="1.9" stroke-linecap="round" stroke-linejoin="round"/></svg>
<svg style="position:absolute;left:1158px;top:502px;overflow:visible;" width="13" height="13" viewBox="0 0 13 13"><rect x="0.5" y="0.5" width="12" height="12" fill="#fff" stroke="#8a8a8a"/><defs></defs><rect x="2" y="2" width="9" height="9" fill="url(#cbg)"/></svg>
<div class="t" style="left:260px;top:497.8px;font-size:11.6px;font-weight:400;color:#111;line-height:20px;">Subcontractor formwork for foundation walls</div>
<div class="t" style="right:643px;top:497.8px;font-size:10.75px;font-weight:400;color:#222;line-height:20px;text-align:right;">10,00 %</div>
<div class="t" style="right:543px;top:497.8px;font-size:10.65px;font-weight:400;color:#222;line-height:20px;text-align:right;">165,00 $</div>
<div class="t" style="left:796px;width:400px;top:497.8px;font-size:11.5px;font-weight:400;color:#222;line-height:20px;text-align:center;">$</div>
<div class="t" style="left:1004px;top:497.8px;font-size:13.5px;font-weight:400;color:#222;line-height:20px;">+</div>
<div style="left:1015px;top:499px;width:12px;height:20px;overflow:hidden;"><div class="t" style="left:-3px;top:-1.2px;font-size:11.2px;color:#222;line-height:20px;">00</div></div>
<div class="t" style="left:1031px;top:497.8px;font-size:13.5px;font-weight:400;color:#222;line-height:20px;">+</div>
<div class="t" style="right:391px;top:497.8px;font-size:10.65px;font-weight:400;color:#222;line-height:20px;text-align:right;">1 815,00 $</div>
<svg style="position:absolute;left:127px;top:522px;overflow:visible;" width="13" height="13" viewBox="0 0 13 13"><rect x="0.5" y="0.5" width="12" height="12" fill="#fff" stroke="#8a8a8a"/><defs></defs><rect x="2" y="2" width="9" height="9" fill="url(#cbg)"/><path d="M3.3 6.7 L5.6 9.6 L9.7 2.8" fill="none" stroke="#3c519e" stroke-width="1.9" stroke-linecap="round" stroke-linejoin="round"/></svg>
<svg style="position:absolute;left:1158px;top:522px;overflow:visible;" width="13" height="13" viewBox="0 0 13 13"><rect x="0.5" y="0.5" width="12" height="12" fill="#fff" stroke="#8a8a8a"/><defs></defs><rect x="2" y="2" width="9" height="9" fill="url(#cbg)"/></svg>
<div class="t" style="left:260px;top:517.8px;font-size:11.6px;font-weight:400;color:#111;line-height:20px;">Concreting foundation walls</div>
<div class="t" style="right:643px;top:517.8px;font-size:10.75px;font-weight:400;color:#222;line-height:20px;text-align:right;">10,00 %</div>
<div class="t" style="right:543px;top:517.8px;font-size:10.65px;font-weight:400;color:#222;line-height:20px;text-align:right;">484,05 $</div>
<div class="t" style="left:796px;width:400px;top:517.8px;font-size:11.5px;font-weight:400;color:#222;line-height:20px;text-align:center;">$</div>
<div class="t" style="left:1004px;top:517.8px;font-size:13.5px;font-weight:400;color:#222;line-height:20px;">+</div>
<div style="left:1015px;top:519px;width:12px;height:20px;overflow:hidden;"><div class="t" style="left:-3px;top:-1.2px;font-size:11.2px;color:#222;line-height:20px;">00</div></div>
<div class="t" style="left:1031px;top:517.8px;font-size:13.5px;font-weight:400;color:#222;line-height:20px;">+</div>
<div class="t" style="right:391px;top:517.8px;font-size:10.65px;font-weight:400;color:#222;line-height:20px;text-align:right;">5 324,59 $</div>
<svg style="position:absolute;left:127px;top:542px;overflow:visible;" width="13" height="13" viewBox="0 0 13 13"><rect x="0.5" y="0.5" width="12" height="12" fill="#fff" stroke="#8a8a8a"/><defs></defs><rect x="2" y="2" width="9" height="9" fill="url(#cbg)"/><path d="M3.3 6.7 L5.6 9.6 L9.7 2.8" fill="none" stroke="#3c519e" stroke-width="1.9" stroke-linecap="round" stroke-linejoin="round"/></svg>
<svg style="position:absolute;left:1158px;top:542px;overflow:visible;" width="13" height="13" viewBox="0 0 13 13"><rect x="0.5" y="0.5" width="12" height="12" fill="#fff" stroke="#8a8a8a"/><defs></defs><rect x="2" y="2" width="9" height="9" fill="url(#cbg)"/></svg>
<div class="t" style="left:260px;top:537.8px;font-size:11.6px;font-weight:400;color:#111;line-height:20px;">External insulation of foundations</div>
<div class="t" style="right:643px;top:537.8px;font-size:10.75px;font-weight:400;color:#222;line-height:20px;text-align:right;">10,00 %</div>
<div class="t" style="right:543px;top:537.8px;font-size:10.65px;font-weight:400;color:#222;line-height:20px;text-align:right;">242,00 $</div>
<div class="t" style="left:796px;width:400px;top:537.8px;font-size:11.5px;font-weight:400;color:#222;line-height:20px;text-align:center;">$</div>
<div class="t" style="left:1004px;top:537.8px;font-size:13.5px;font-weight:400;color:#222;line-height:20px;">+</div>
<div style="left:1015px;top:539px;width:12px;height:20px;overflow:hidden;"><div class="t" style="left:-3px;top:-1.2px;font-size:11.2px;color:#222;line-height:20px;">00</div></div>
<div class="t" style="left:1031px;top:537.8px;font-size:13.5px;font-weight:400;color:#222;line-height:20px;">+</div>
<div class="t" style="right:391px;top:537.8px;font-size:10.65px;font-weight:400;color:#222;line-height:20px;text-align:right;">2 662,00 $</div>
<svg style="position:absolute;left:127px;top:562px;overflow:visible;" width="13" height="13" viewBox="0 0 13 13"><rect x="0.5" y="0.5" width="12" height="12" fill="#fff" stroke="#8a8a8a"/><defs></defs><rect x="2" y="2" width="9" height="9" fill="url(#cbg)"/><path d="M3.3 6.7 L5.6 9.6 L9.7 2.8" fill="none" stroke="#3c519e" stroke-width="1.9" stroke-linecap="round" stroke-linejoin="round"/></svg>
<svg style="position:absolute;left:1158px;top:562px;overflow:visible;" width="13" height="13" viewBox="0 0 13 13"><rect x="0.5" y="0.5" width="12" height="12" fill="#fff" stroke="#8a8a8a"/><defs></defs><rect x="2" y="2" width="9" height="9" fill="url(#cbg)"/></svg>
<div class="t" style="left:260px;top:557.8px;font-size:11.6px;font-weight:400;color:#111;line-height:20px;">Interior insulation of foundations</div>
<div class="t" style="right:643px;top:557.8px;font-size:10.75px;font-weight:400;color:#222;line-height:20px;text-align:right;">10,00 %</div>
<div class="t" style="right:543px;top:557.8px;font-size:10.65px;font-weight:400;color:#222;line-height:20px;text-align:right;">37,84 $</div>
<div class="t" style="left:796px;width:400px;top:557.8px;font-size:11.5px;font-weight:400;color:#222;line-height:20px;text-align:center;">$</div>
<div class="t" style="left:1004px;top:557.8px;font-size:13.5px;font-weight:400;color:#222;line-height:20px;">+</div>
<div style="left:1015px;top:559px;width:12px;height:20px;overflow:hidden;"><div class="t" style="left:-3px;top:-1.2px;font-size:11.2px;color:#222;line-height:20px;">00</div></div>
<div class="t" style="left:1031px;top:557.8px;font-size:13.5px;font-weight:400;color:#222;line-height:20px;">+</div>
<div class="t" style="right:391px;top:557.8px;font-size:10.65px;font-weight:400;color:#222;line-height:20px;text-align:right;">416,24 $</div>
<svg style="position:absolute;left:127px;top:582px;overflow:visible;" width="13" height="13" viewBox="0 0 13 13"><rect x="0.5" y="0.5" width="12" height="12" fill="#fff" stroke="#8a8a8a"/><defs></defs><rect x="2" y="2" width="9" height="9" fill="url(#cbg)"/><path d="M3.3 6.7 L5.6 9.6 L9.7 2.8" fill="none" stroke="#3c519e" stroke-width="1.9" stroke-linecap="round" stroke-linejoin="round"/></svg>
<svg style="position:absolute;left:1158px;top:582px;overflow:visible;" width="13" height="13" viewBox="0 0 13 13"><rect x="0.5" y="0.5" width="12" height="12" fill="#fff" stroke="#8a8a8a"/><defs></defs><rect x="2" y="2" width="9" height="9" fill="url(#cbg)"/></svg>
<div class="t" style="left:260px;top:577.8px;font-size:11.6px;font-weight:400;color:#111;line-height:20px;">Foudations waterproofing</div>
<div class="t" style="right:643px;top:577.8px;font-size:10.75px;font-weight:400;color:#222;line-height:20px;text-align:right;">10,00 %</div>
<div class="t" style="right:543px;top:577.8px;font-size:10.65px;font-weight:400;color:#222;line-height:20px;text-align:right;">46,33 $</div>
<div class="t" style="left:796px;width:400px;top:577.8px;font-size:11.5px;font-weight:400;color:#222;line-height:20px;text-align:center;">$</div>
<div class="t" style="left:1004px;top:577.8px;font-size:13.5px;font-weight:400;color:#222;line-height:20px;">+</div>
<div style="left:1015px;top:579px;width:12px;height:20px;overflow:hidden;"><div class="t" style="left:-3px;top:-1.2px;font-size:11.2px;color:#222;line-height:20px;">00</div></div>
<div class="t" style="left:1031px;top:577.8px;font-size:13.5px;font-weight:400;color:#222;line-height:20px;">+</div>
<div class="t" style="right:391px;top:577.8px;font-size:10.65px;font-weight:400;color:#222;line-height:20px;text-align:right;">509,65 $</div>
<svg style="position:absolute;left:127px;top:602px;overflow:visible;" width="13" height="13" viewBox="0 0 13 13"><rect x="0.5" y="0.5" width="12" height="12" fill="#fff" stroke="#8a8a8a"/><defs></defs><rect x="2" y="2" width="9" height="9" fill="url(#cbg)"/><path d="M3.3 6.7 L5.6 9.6 L9.7 2.8" fill="none" stroke="#3c519e" stroke-width="1.9" stroke-linecap="round" stroke-linejoin="round"/></svg>
<svg style="position:absolute;left:1158px;top:602px;overflow:visible;" width="13" height="13" viewBox="0 0 13 13"><rect x="0.5" y="0.5" width="12" height="12" fill="#fff" stroke="#8a8a8a"/><defs></defs><rect x="2" y="2" width="9" height="9" fill="url(#cbg)"/></svg>
<div class="t" style="left:260px;top:597.8px;font-size:11.6px;font-weight:400;color:#111;line-height:20px;">03- soles and footings DIM</div>
<div class="t" style="right:643px;top:597.8px;font-size:10.75px;font-weight:400;color:#222;line-height:20px;text-align:right;">10,00 %</div>
<div class="t" style="right:543px;top:597.8px;font-size:10.65px;font-weight:400;color:#222;line-height:20px;text-align:right;">270,94 $</div>
<div class="t" style="left:796px;width:400px;top:597.8px;font-size:11.5px;font-weight:400;color:#222;line-height:20px;text-align:center;">$</div>
<div class="t" style="left:1004px;top:597.8px;font-size:13.5px;font-weight:400;color:#222;line-height:20px;">+</div>
<div style="left:1015px;top:599px;width:12px;height:20px;overflow:hidden;"><div class="t" style="left:-3px;top:-1.2px;font-size:11.2px;color:#222;line-height:20px;">00</div></div>
<div class="t" style="left:1031px;top:597.8px;font-size:13.5px;font-weight:400;color:#222;line-height:20px;">+</div>
<div class="t" style="right:391px;top:597.8px;font-size:10.65px;font-weight:400;color:#222;line-height:20px;text-align:right;">2 980,30 $</div>
<svg style="position:absolute;left:127px;top:622px;overflow:visible;" width="13" height="13" viewBox="0 0 13 13"><rect x="0.5" y="0.5" width="12" height="12" fill="#fff" stroke="#8a8a8a"/><defs></defs><rect x="2" y="2" width="9" height="9" fill="url(#cbg)"/><path d="M3.3 6.7 L5.6 9.6 L9.7 2.8" fill="none" stroke="#3c519e" stroke-width="1.9" stroke-linecap="round" stroke-linejoin="round"/></svg>
<svg style="position:absolute;left:1158px;top:622px;overflow:visible;" width="13" height="13" viewBox="0 0 13 13"><rect x="0.5" y="0.5" width="12" height="12" fill="#fff" stroke="#8a8a8a"/><defs></defs><rect x="2" y="2" width="9" height="9" fill="url(#cbg)"/></svg>
<div class="t" style="left:260px;top:617.8px;font-size:11.6px;font-weight:400;color:#111;line-height:20px;">03- Concrete slab DIM</div>
<div class="t" style="left:591px;top:617.8px;font-size:11.1px;font-weight:400;color:#111;line-height:20px;">Garage</div>
<div class="t" style="right:643px;top:617.8px;font-size:10.75px;font-weight:400;color:#222;line-height:20px;text-align:right;">10,00 %</div>
<div class="t" style="right:543px;top:617.8px;font-size:10.65px;font-weight:400;color:#222;line-height:20px;text-align:right;">375,30 $</div>
<div class="t" style="left:796px;width:400px;top:617.8px;font-size:11.5px;font-weight:400;color:#222;line-height:20px;text-align:center;">$</div>
<div class="t" style="left:1004px;top:617.8px;font-size:13.5px;font-weight:400;color:#222;line-height:20px;">+</div>
<div style="left:1015px;top:619px;width:12px;height:20px;overflow:hidden;"><div class="t" style="left:-3px;top:-1.2px;font-size:11.2px;color:#222;line-height:20px;">00</div></div>
<div class="t" style="left:1031px;top:617.8px;font-size:13.5px;font-weight:400;color:#222;line-height:20px;">+</div>
<div class="t" style="right:391px;top:617.8px;font-size:10.65px;font-weight:400;color:#222;line-height:20px;text-align:right;">4 128,27 $</div>
<svg style="position:absolute;left:127px;top:642px;overflow:visible;" width="13" height="13" viewBox="0 0 13 13"><rect x="0.5" y="0.5" width="12" height="12" fill="#fff" stroke="#8a8a8a"/><defs></defs><rect x="2" y="2" width="9" height="9" fill="url(#cbg)"/><path d="M3.3 6.7 L5.6 9.6 L9.7 2.8" fill="none" stroke="#3c519e" stroke-width="1.9" stroke-linecap="round" stroke-linejoin="round"/></svg>
<svg style="position:absolute;left:1158px;top:642px;overflow:visible;" width="13" height="13" viewBox="0 0 13 13"><rect x="0.5" y="0.5" width="12" height="12" fill="#fff" stroke="#8a8a8a"/><defs></defs><rect x="2" y="2" width="9" height="9" fill="url(#cbg)"/></svg>
<div class="t" style="left:260px;top:637.8px;font-size:11.8px;font-weight:700;color:#fff;line-height:20px;">04 - Masonry</div>
<div class="t" style="right:643px;top:637.8px;font-size:10.75px;font-weight:400;color:#fff;line-height:20px;text-align:right;">10,00 %</div>
<div class="t" style="right:543px;top:637.8px;font-size:10.65px;font-weight:400;color:#fff;line-height:20px;text-align:right;">2 090,00 $</div>
<div class="t" style="left:796px;width:400px;top:637.8px;font-size:11.5px;font-weight:700;color:#fff;line-height:20px;text-align:center;">$</div>
<div class="t" style="left:1004px;top:637.8px;font-size:13.5px;font-weight:400;color:#fff;line-height:20px;">+</div>
<div style="left:1015px;top:639px;width:12px;height:20px;overflow:hidden;"><div class="t" style="left:-3px;top:-1.2px;font-size:11.2px;color:#fff;line-height:20px;">00</div></div>
<div class="t" style="left:1031px;top:637.8px;font-size:13.5px;font-weight:400;color:#fff;line-height:20px;">+</div>
<div class="t" style="right:391px;top:637.8px;font-size:12.2px;font-weight:700;color:#fff;line-height:20px;text-align:right;">22 990,00 $</div>
<svg style="position:absolute;left:127px;top:662px;overflow:visible;" width="13" height="13" viewBox="0 0 13 13"><rect x="0.5" y="0.5" width="12" height="12" fill="#fff" stroke="#8a8a8a"/><defs></defs><rect x="2" y="2" width="9" height="9" fill="url(#cbg)"/><path d="M3.3 6.7 L5.6 9.6 L9.7 2.8" fill="none" stroke="#3c519e" stroke-width="1.9" stroke-linecap="round" stroke-linejoin="round"/></svg>
<svg style="position:absolute;left:1158px;top:662px;overflow:visible;" width="13" height="13" viewBox="0 0 13 13"><rect x="0.5" y="0.5" width="12" height="12" fill="#fff" stroke="#8a8a8a"/><defs></defs><rect x="2" y="2" width="9" height="9" fill="url(#cbg)"/></svg>
<div class="t" style="left:260px;top:657.8px;font-size:11.8px;font-weight:700;color:#fff;line-height:20px;">06-Millwork</div>
<div class="t" style="right:643px;top:657.8px;font-size:10.75px;font-weight:400;color:#fff;line-height:20px;text-align:right;">10,00 %</div>
<div class="t" style="right:543px;top:657.8px;font-size:10.65px;font-weight:400;color:#fff;line-height:20px;text-align:right;">199,02 $</div>
<div class="t" style="left:796px;width:400px;top:657.8px;font-size:11.5px;font-weight:700;color:#fff;line-height:20px;text-align:center;">$</div>
<div class="t" style="left:1004px;top:657.8px;font-size:13.5px;font-weight:400;color:#fff;line-height:20px;">+</div>
<div style="left:1015px;top:659px;width:12px;height:20px;overflow:hidden;"><div class="t" style="left:-3px;top:-1.2px;font-size:11.2px;color:#fff;line-height:20px;">00</div></div>
<div class="t" style="left:1031px;top:657.8px;font-size:13.5px;font-weight:400;color:#fff;line-height:20px;">+</div>
<div class="t" style="right:391px;top:657.8px;font-size:12.2px;font-weight:700;color:#fff;line-height:20px;text-align:right;">2 189,24 $</div>
<svg style="position:absolute;left:127px;top:682px;overflow:visible;" width="13" height="13" viewBox="0 0 13 13"><rect x="0.5" y="0.5" width="12" height="12" fill="#fff" stroke="#8a8a8a"/><defs></defs><rect x="2" y="2" width="9" height="9" fill="url(#cbg)"/><path d="M3.3 6.7 L5.6 9.6 L9.7 2.8" fill="none" stroke="#3c519e" stroke-width="1.9" stroke-linecap="round" stroke-linejoin="round"/></svg>
<svg style="position:absolute;left:1158px;top:682px;overflow:visible;" width="13" height="13" viewBox="0 0 13 13"><rect x="0.5" y="0.5" width="12" height="12" fill="#fff" stroke="#8a8a8a"/><defs></defs><rect x="2" y="2" width="9" height="9" fill="url(#cbg)"/></svg>
<div class="t" style="left:260px;top:677.8px;font-size:11.8px;font-weight:700;color:#fff;line-height:20px;">06 - Partition &amp; ceilings</div>
<div class="t" style="right:643px;top:677.8px;font-size:10.75px;font-weight:400;color:#fff;line-height:20px;text-align:right;">10,00 %</div>
<div class="t" style="right:543px;top:677.8px;font-size:10.65px;font-weight:400;color:#fff;line-height:20px;text-align:right;">1 783,08 $</div>
<div class="t" style="left:796px;width:400px;top:677.8px;font-size:11.5px;font-weight:700;color:#fff;line-height:20px;text-align:center;">$</div>
<div class="t" style="left:1004px;top:677.8px;font-size:13.5px;font-weight:400;color:#fff;line-height:20px;">+</div>
<div style="left:1015px;top:679px;width:12px;height:20px;overflow:hidden;"><div class="t" style="left:-3px;top:-1.2px;font-size:11.2px;color:#fff;line-height:20px;">00</div></div>
<div class="t" style="left:1031px;top:677.8px;font-size:13.5px;font-weight:400;color:#fff;line-height:20px;">+</div>
<div class="t" style="right:391px;top:677.8px;font-size:12.2px;font-weight:700;color:#fff;line-height:20px;text-align:right;">19 613,90 $</div>
<svg style="position:absolute;left:127px;top:702px;overflow:visible;" width="13" height="13" viewBox="0 0 13 13"><rect x="0.5" y="0.5" width="12" height="12" fill="#fff" stroke="#8a8a8a"/><defs></defs><rect x="2" y="2" width="9" height="9" fill="url(#cbg)"/><path d="M3.3 6.7 L5.6 9.6 L9.7 2.8" fill="none" stroke="#3c519e" stroke-width="1.9" stroke-linecap="round" stroke-linejoin="round"/></svg>
<svg style="position:absolute;left:1158px;top:702px;overflow:visible;" width="13" height="13" viewBox="0 0 13 13"><rect x="0.5" y="0.5" width="12" height="12" fill="#fff" stroke="#8a8a8a"/><defs></defs><rect x="2" y="2" width="9" height="9" fill="url(#cbg)"/></svg>
<div class="t" style="left:260px;top:697.8px;font-size:11.8px;font-weight:700;color:#fff;line-height:20px;">08 - Doors &amp; windows</div>
<div class="t" style="right:643px;top:697.8px;font-size:10.75px;font-weight:400;color:#fff;line-height:20px;text-align:right;">10,00 %</div>
<div class="t" style="right:543px;top:697.8px;font-size:10.65px;font-weight:400;color:#fff;line-height:20px;text-align:right;">336,36 $</div>
<div class="t" style="left:796px;width:400px;top:697.8px;font-size:11.5px;font-weight:700;color:#fff;line-height:20px;text-align:center;">$</div>
<div class="t" style="left:1004px;top:697.8px;font-size:13.5px;font-weight:400;color:#fff;line-height:20px;">+</div>
<div style="left:1015px;top:699px;width:12px;height:20px;overflow:hidden;"><div class="t" style="left:-3px;top:-1.2px;font-size:11.2px;color:#fff;line-height:20px;">00</div></div>
<div class="t" style="left:1031px;top:697.8px;font-size:13.5px;font-weight:400;color:#fff;line-height:20px;">+</div>
<div class="t" style="right:391px;top:697.8px;font-size:12.2px;font-weight:700;color:#fff;line-height:20px;text-align:right;">3 700,01 $</div>
<svg style="position:absolute;left:127px;top:722px;overflow:visible;" width="13" height="13" viewBox="0 0 13 13"><rect x="0.5" y="0.5" width="12" height="12" fill="#fff" stroke="#8a8a8a"/><defs></defs><rect x="2" y="2" width="9" height="9" fill="url(#cbg)"/><path d="M3.3 6.7 L5.6 9.6 L9.7 2.8" fill="none" stroke="#3c519e" stroke-width="1.9" stroke-linecap="round" stroke-linejoin="round"/></svg>
<svg style="position:absolute;left:1158px;top:722px;overflow:visible;" width="13" height="13" viewBox="0 0 13 13"><rect x="0.5" y="0.5" width="12" height="12" fill="#fff" stroke="#8a8a8a"/><defs></defs><rect x="2" y="2" width="9" height="9" fill="url(#cbg)"/></svg>
<div class="t" style="left:260px;top:717.8px;font-size:11.8px;font-weight:700;color:#fff;line-height:20px;">09 -Interior finishing</div>
<div class="t" style="right:643px;top:717.8px;font-size:10.75px;font-weight:400;color:#fff;line-height:20px;text-align:right;">10,00 %</div>
<div class="t" style="right:543px;top:717.8px;font-size:10.65px;font-weight:400;color:#fff;line-height:20px;text-align:right;">1 222,44 $</div>
<div class="t" style="left:796px;width:400px;top:717.8px;font-size:11.5px;font-weight:700;color:#fff;line-height:20px;text-align:center;">$</div>
<div class="t" style="left:1004px;top:717.8px;font-size:13.5px;font-weight:400;color:#fff;line-height:20px;">+</div>
<div style="left:1015px;top:719px;width:12px;height:20px;overflow:hidden;"><div class="t" style="left:-3px;top:-1.2px;font-size:11.2px;color:#fff;line-height:20px;">00</div></div>
<div class="t" style="left:1031px;top:717.8px;font-size:13.5px;font-weight:400;color:#fff;line-height:20px;">+</div>
<div class="t" style="right:391px;top:717.8px;font-size:12.2px;font-weight:700;color:#fff;line-height:20px;text-align:right;">13 446,79 $</div>
<svg style="position:absolute;left:127px;top:742px;overflow:visible;" width="13" height="13" viewBox="0 0 13 13"><rect x="0.5" y="0.5" width="12" height="12" fill="#fff" stroke="#8a8a8a"/><defs></defs><rect x="2" y="2" width="9" height="9" fill="url(#cbg)"/><path d="M3.3 6.7 L5.6 9.6 L9.7 2.8" fill="none" stroke="#3c519e" stroke-width="1.9" stroke-linecap="round" stroke-linejoin="round"/></svg>
<svg style="position:absolute;left:1158px;top:742px;overflow:visible;" width="13" height="13" viewBox="0 0 13 13"><rect x="0.5" y="0.5" width="12" height="12" fill="#fff" stroke="#8a8a8a"/><defs></defs><rect x="2" y="2" width="9" height="9" fill="url(#cbg)"/></svg>
<div class="t" style="left:260px;top:737.8px;font-size:11.8px;font-weight:700;color:#fff;line-height:20px;">09- Floor Covering</div>
<div class="t" style="right:643px;top:737.8px;font-size:10.75px;font-weight:400;color:#fff;line-height:20px;text-align:right;">10,00 %</div>
<div class="t" style="right:543px;top:737.8px;font-size:10.65px;font-weight:400;color:#fff;line-height:20px;text-align:right;">2 387,60 $</div>
<div class="t" style="left:796px;width:400px;top:737.8px;font-size:11.5px;font-weight:700;color:#fff;line-height:20px;text-align:center;">$</div>
<div class="t" style="left:1004px;top:737.8px;font-size:13.5px;font-weight:400;color:#fff;line-height:20px;">+</div>
<div style="left:1015px;top:739px;width:12px;height:20px;overflow:hidden;"><div class="t" style="left:-3px;top:-1.2px;font-size:11.2px;color:#fff;line-height:20px;">00</div></div>
<div class="t" style="left:1031px;top:737.8px;font-size:13.5px;font-weight:400;color:#fff;line-height:20px;">+</div>
<div class="t" style="right:391px;top:737.8px;font-size:12.2px;font-weight:700;color:#fff;line-height:20px;text-align:right;">26 263,59 $</div>
<svg style="position:absolute;left:127px;top:762px;overflow:visible;" width="13" height="13" viewBox="0 0 13 13"><rect x="0.5" y="0.5" width="12" height="12" fill="#fff" stroke="#8a8a8a"/><defs></defs><rect x="2" y="2" width="9" height="9" fill="url(#cbg)"/><path d="M3.3 6.7 L5.6 9.6 L9.7 2.8" fill="none" stroke="#3c519e" stroke-width="1.9" stroke-linecap="round" stroke-linejoin="round"/></svg>
<svg style="position:absolute;left:1158px;top:762px;overflow:visible;" width="13" height="13" viewBox="0 0 13 13"><rect x="0.5" y="0.5" width="12" height="12" fill="#fff" stroke="#8a8a8a"/><defs></defs><rect x="2" y="2" width="9" height="9" fill="url(#cbg)"/></svg>
<div class="t" style="left:260px;top:757.8px;font-size:11.8px;font-weight:700;color:#fff;line-height:20px;">13 - Special Construction</div>
<div class="t" style="right:643px;top:757.8px;font-size:10.75px;font-weight:400;color:#fff;line-height:20px;text-align:right;">10,00 %</div>
<div class="t" style="right:543px;top:757.8px;font-size:10.65px;font-weight:400;color:#fff;line-height:20px;text-align:right;">57,97 $</div>
<div class="t" style="left:796px;width:400px;top:757.8px;font-size:11.5px;font-weight:700;color:#fff;line-height:20px;text-align:center;">$</div>
<div class="t" style="left:1004px;top:757.8px;font-size:13.5px;font-weight:400;color:#fff;line-height:20px;">+</div>
<div style="left:1015px;top:759px;width:12px;height:20px;overflow:hidden;"><div class="t" style="left:-3px;top:-1.2px;font-size:11.2px;color:#fff;line-height:20px;">00</div></div>
<div class="t" style="left:1031px;top:757.8px;font-size:13.5px;font-weight:400;color:#fff;line-height:20px;">+</div>
<div class="t" style="right:391px;top:757.8px;font-size:12.2px;font-weight:700;color:#fff;line-height:20px;text-align:right;">637,67 $</div>
<svg style="position:absolute;left:127px;top:782px;overflow:visible;" width="13" height="13" viewBox="0 0 13 13"><rect x="0.5" y="0.5" width="12" height="12" fill="#fff" stroke="#8a8a8a"/><defs></defs><rect x="2" y="2" width="9" height="9" fill="url(#cbg)"/><path d="M3.3 6.7 L5.6 9.6 L9.7 2.8" fill="none" stroke="#3c519e" stroke-width="1.9" stroke-linecap="round" stroke-linejoin="round"/></svg>
<svg style="position:absolute;left:1158px;top:782px;overflow:visible;" width="13" height="13" viewBox="0 0 13 13"><rect x="0.5" y="0.5" width="12" height="12" fill="#fff" stroke="#8a8a8a"/><defs></defs><rect x="2" y="2" width="9" height="9" fill="url(#cbg)"/></svg>
<div class="t" style="left:260px;top:777.8px;font-size:11.8px;font-weight:700;color:#fff;line-height:20px;">15.1 - Plumbing</div>
<div class="t" style="right:643px;top:777.8px;font-size:10.75px;font-weight:400;color:#fff;line-height:20px;text-align:right;">5,00 %</div>
<div class="t" style="right:543px;top:777.8px;font-size:10.65px;font-weight:400;color:#fff;line-height:20px;text-align:right;">137,50 $</div>
<div class="t" style="left:796px;width:400px;top:777.8px;font-size:11.5px;font-weight:700;color:#fff;line-height:20px;text-align:center;">$</div>
<div class="t" style="left:1004px;top:777.8px;font-size:13.5px;font-weight:400;color:#fff;line-height:20px;">+</div>
<div style="left:1015px;top:779px;width:12px;height:20px;overflow:hidden;"><div class="t" style="left:-3px;top:-1.2px;font-size:11.2px;color:#fff;line-height:20px;">00</div></div>
<div class="t" style="left:1031px;top:777.8px;font-size:13.5px;font-weight:400;color:#fff;line-height:20px;">+</div>
<div class="t" style="right:391px;top:777.8px;font-size:12.2px;font-weight:700;color:#fff;line-height:20px;text-align:right;">2 887,50 $</div>
<svg style="position:absolute;left:127px;top:802px;overflow:visible;" width="13" height="13" viewBox="0 0 13 13"><rect x="0.5" y="0.5" width="12" height="12" fill="#fff" stroke="#8a8a8a"/><defs></defs><rect x="2" y="2" width="9" height="9" fill="url(#cbg)"/><path d="M3.3 6.7 L5.6 9.6 L9.7 2.8" fill="none" stroke="#3c519e" stroke-width="1.9" stroke-linecap="round" stroke-linejoin="round"/></svg>
<svg style="position:absolute;left:1158px;top:802px;overflow:visible;" width="13" height="13" viewBox="0 0 13 13"><rect x="0.5" y="0.5" width="12" height="12" fill="#fff" stroke="#8a8a8a"/><defs></defs><rect x="2" y="2" width="9" height="9" fill="url(#cbg)"/></svg>
<div class="t" style="left:260px;top:797.8px;font-size:11.8px;font-weight:700;color:#fff;line-height:20px;">15.2 - Ventilation (HVAC)</div>
<div class="t" style="right:643px;top:797.8px;font-size:10.75px;font-weight:400;color:#fff;line-height:20px;text-align:right;">10,00 %</div>
<div class="t" style="right:543px;top:797.8px;font-size:10.65px;font-weight:400;color:#fff;line-height:20px;text-align:right;">605,00 $</div>
<div class="t" style="left:796px;width:400px;top:797.8px;font-size:11.5px;font-weight:700;color:#fff;line-height:20px;text-align:center;">$</div>
<div class="t" style="left:1004px;top:797.8px;font-size:13.5px;font-weight:400;color:#fff;line-height:20px;">+</div>
<div style="left:1015px;top:799px;width:12px;height:20px;overflow:hidden;"><div class="t" style="left:-3px;top:-1.2px;font-size:11.2px;color:#fff;line-height:20px;">00</div></div>
<div class="t" style="left:1031px;top:797.8px;font-size:13.5px;font-weight:400;color:#fff;line-height:20px;">+</div>
<div class="t" style="right:391px;top:797.8px;font-size:12.2px;font-weight:700;color:#fff;line-height:20px;text-align:right;">6 655,00 $</div>
<svg style="position:absolute;left:127px;top:822px;overflow:visible;" width="13" height="13" viewBox="0 0 13 13"><rect x="0.5" y="0.5" width="12" height="12" fill="#fff" stroke="#8a8a8a"/><defs></defs><rect x="2" y="2" width="9" height="9" fill="url(#cbg)"/><path d="M3.3 6.7 L5.6 9.6 L9.7 2.8" fill="none" stroke="#3c519e" stroke-width="1.9" stroke-linecap="round" stroke-linejoin="round"/></svg>
<svg style="position:absolute;left:1158px;top:822px;overflow:visible;" width="13" height="13" viewBox="0 0 13 13"><rect x="0.5" y="0.5" width="12" height="12" fill="#fff" stroke="#8a8a8a"/><defs></defs><rect x="2" y="2" width="9" height="9" fill="url(#cbg)"/></svg>
<div class="t" style="left:260px;top:817.8px;font-size:11.8px;font-weight:700;color:#fff;line-height:20px;">16 - Electricity</div>
<div class="t" style="right:643px;top:817.8px;font-size:10.75px;font-weight:400;color:#fff;line-height:20px;text-align:right;">10,00 %</div>
<div class="t" style="right:543px;top:817.8px;font-size:10.65px;font-weight:400;color:#fff;line-height:20px;text-align:right;">525,00 $</div>
<div class="t" style="left:796px;width:400px;top:817.8px;font-size:11.5px;font-weight:700;color:#fff;line-height:20px;text-align:center;">$</div>
<div class="t" style="left:1004px;top:817.8px;font-size:13.5px;font-weight:400;color:#fff;line-height:20px;">+</div>
<div style="left:1015px;top:819px;width:12px;height:20px;overflow:hidden;"><div class="t" style="left:-3px;top:-1.2px;font-size:11.2px;color:#fff;line-height:20px;">00</div></div>
<div class="t" style="left:1031px;top:817.8px;font-size:13.5px;font-weight:400;color:#fff;line-height:20px;">+</div>
<div class="t" style="right:391px;top:817.8px;font-size:12.2px;font-weight:700;color:#fff;line-height:20px;text-align:right;">5 775,00 $</div>
<div class="" style="left:758px;top:339px;width:1px;height:500px;background:#6e6e6e;"></div>
<div class="" style="left:1189px;top:318px;width:1px;height:521px;background:#6e6e6e;"></div>
<div class="" style="left:38px;top:352.5px;width:1px;height:16px;background:#000;"></div>
<div class="" style="left:38px;top:368.5px;width:9px;height:1px;background:#000;"></div>
<div class="" style="left:51px;top:372.5px;width:1px;height:457.0px;background:#000;"></div>
<div class="" style="left:64px;top:432.5px;width:1px;height:197.0px;background:#000;"></div>
<div class="" style="left:77px;top:452.5px;width:1px;height:137.0px;background:#000;"></div>
<div class="" style="left:38px;top:368px;width:9px;height:1px;background:#000;"></div>
<div class="" style="left:51px;top:388px;width:9px;height:1px;background:#000;"></div>
<div class="" style="left:51px;top:408px;width:9px;height:1px;background:#000;"></div>
<div class="" style="left:51px;top:428px;width:9px;height:1px;background:#000;"></div>
<div class="" style="left:64px;top:448px;width:9px;height:1px;background:#000;"></div>
<div class="" style="left:77px;top:468px;width:9px;height:1px;background:#000;"></div>
<div class="" style="left:77px;top:488px;width:9px;height:1px;background:#000;"></div>
<div class="" style="left:77px;top:508px;width:9px;height:1px;background:#000;"></div>
<div class="" style="left:77px;top:528px;width:9px;height:1px;background:#000;"></div>
<div class="" style="left:77px;top:548px;width:9px;height:1px;background:#000;"></div>
<div class="" style="left:77px;top:568px;width:9px;height:1px;background:#000;"></div>
<div class="" style="left:77px;top:588px;width:9px;height:1px;background:#000;"></div>
<div class="" style="left:64px;top:608px;width:9px;height:1px;background:#000;"></div>
<div class="" style="left:64px;top:628px;width:9px;height:1px;background:#000;"></div>
<div class="" style="left:51px;top:648px;width:9px;height:1px;background:#000;"></div>
<div class="" style="left:51px;top:668px;width:9px;height:1px;background:#000;"></div>
<div class="" style="left:51px;top:688px;width:9px;height:1px;background:#000;"></div>
<div class="" style="left:51px;top:708px;width:9px;height:1px;background:#000;"></div>
<div class="" style="left:51px;top:728px;width:9px;height:1px;background:#000;"></div>
<div class="" style="left:51px;top:748px;width:9px;height:1px;background:#000;"></div>
<div class="" style="left:51px;top:768px;width:9px;height:1px;background:#000;"></div>
<div class="" style="left:51px;top:788px;width:9px;height:1px;background:#000;"></div>
<div class="" style="left:51px;top:808px;width:9px;height:1px;background:#000;"></div>
<div class="" style="left:51px;top:828px;width:9px;height:1px;background:#000;"></div>
<svg style="position:absolute;left:34px;top:344px;overflow:visible;" width="9" height="9" viewBox="0 0 9 9"><rect x="0.5" y="0.5" width="8" height="8" rx="1" fill="url(#pbg)" stroke="#8e8e8e"/><path d="M2 4.5 H7" stroke="#2b3f9a" stroke-width="1.2"/></svg>
<svg style="position:absolute;left:47px;top:364px;overflow:visible;" width="9" height="9" viewBox="0 0 9 9"><rect x="0.5" y="0.5" width="8" height="8" rx="1" fill="url(#pbg)" stroke="#8e8e8e"/><path d="M2 4.5 H7" stroke="#2b3f9a" stroke-width="1.2"/></svg>
<svg style="position:absolute;left:60px;top:384px;overflow:visible;" width="9" height="9" viewBox="0 0 9 9"><rect x="0.5" y="0.5" width="8" height="8" rx="1" fill="url(#pbg)" stroke="#8e8e8e"/><path d="M2 4.5 H7" stroke="#2b3f9a" stroke-width="1.2"/><path d="M4.5 2 V7" stroke="#2b3f9a" stroke-width="1.2"/></svg>
<svg style="position:absolute;left:60px;top:404px;overflow:visible;" width="9" height="9" viewBox="0 0 9 9"><rect x="0.5" y="0.5" width="8" height="8" rx="1" fill="url(#pbg)" stroke="#8e8e8e"/><path d="M2 4.5 H7" stroke="#2b3f9a" stroke-width="1.2"/><path d="M4.5 2 V7" stroke="#2b3f9a" stroke-width="1.2"/></svg>
<svg style="position:absolute;left:60px;top:424px;overflow:visible;" width="9" height="9" viewBox="0 0 9 9"><rect x="0.5" y="0.5" width="8" height="8" rx="1" fill="url(#pbg)" stroke="#8e8e8e"/><path d="M2 4.5 H7" stroke="#2b3f9a" stroke-width="1.2"/></svg>
<svg style="position:absolute;left:73px;top:444px;overflow:visible;" width="9" height="9" viewBox="0 0 9 9"><rect x="0.5" y="0.5" width="8" height="8" rx="1" fill="url(#pbg)" stroke="#8e8e8e"/><path d="M2 4.5 H7" stroke="#2b3f9a" stroke-width="1.2"/></svg>
<svg style="position:absolute;left:86px;top:464px;overflow:visible;" width="9" height="9" viewBox="0 0 9 9"><rect x="0.5" y="0.5" width="8" height="8" rx="1" fill="url(#pbg)" stroke="#8e8e8e"/><path d="M2 4.5 H7" stroke="#2b3f9a" stroke-width="1.2"/><path d="M4.5 2 V7" stroke="#2b3f9a" stroke-width="1.2"/></svg>
<svg style="position:absolute;left:86px;top:484px;overflow:visible;" width="9" height="9" viewBox="0 0 9 9"><rect x="0.5" y="0.5" width="8" height="8" rx="1" fill="url(#pbg)" stroke="#8e8e8e"/><path d="M2 4.5 H7" stroke="#2b3f9a" stroke-width="1.2"/><path d="M4.5 2 V7" stroke="#2b3f9a" stroke-width="1.2"/></svg>
<svg style="position:absolute;left:86px;top:504px;overflow:visible;" width="9" height="9" viewBox="0 0 9 9"><rect x="0.5" y="0.5" width="8" height="8" rx="1" fill="url(#pbg)" stroke="#8e8e8e"/><path d="M2 4.5 H7" stroke="#2b3f9a" stroke-width="1.2"/><path d="M4.5 2 V7" stroke="#2b3f9a" stroke-width="1.2"/></svg>
<svg style="position:absolute;left:86px;top:524px;overflow:visible;" width="9" height="9" viewBox="0 0 9 9"><rect x="0.5" y="0.5" width="8" height="8" rx="1" fill="url(#pbg)" stroke="#8e8e8e"/><path d="M2 4.5 H7" stroke="#2b3f9a" stroke-width="1.2"/><path d="M4.5 2 V7" stroke="#2b3f9a" stroke-width="1.2"/></svg>
<svg style="position:absolute;left:86px;top:544px;overflow:visible;" width="9" height="9" viewBox="0 0 9 9"><rect x="0.5" y="0.5" width="8" height="8" rx="1" fill="url(#pbg)" stroke="#8e8e8e"/><path d="M2 4.5 H7" stroke="#2b3f9a" stroke-width="1.2"/><path d="M4.5 2 V7" stroke="#2b3f9a" stroke-width="1.2"/></svg>
<svg style="position:absolute;left:86px;top:564px;overflow:visible;" width="9" height="9" viewBox="0 0 9 9"><rect x="0.5" y="0.5" width="8" height="8" rx="1" fill="url(#pbg)" stroke="#8e8e8e"/><path d="M2 4.5 H7" stroke="#2b3f9a" stroke-width="1.2"/><path d="M4.5 2 V7" stroke="#2b3f9a" stroke-width="1.2"/></svg>
<svg style="position:absolute;left:86px;top:584px;overflow:visible;" width="9" height="9" viewBox="0 0 9 9"><rect x="0.5" y="0.5" width="8" height="8" rx="1" fill="url(#pbg)" stroke="#8e8e8e"/><path d="M2 4.5 H7" stroke="#2b3f9a" stroke-width="1.2"/><path d="M4.5 2 V7" stroke="#2b3f9a" stroke-width="1.2"/></svg>
<svg style="position:absolute;left:73px;top:604px;overflow:visible;" width="9" height="9" viewBox="0 0 9 9"><rect x="0.5" y="0.5" width="8" height="8" rx="1" fill="url(#pbg)" stroke="#8e8e8e"/><path d="M2 4.5 H7" stroke="#2b3f9a" stroke-width="1.2"/><path d="M4.5 2 V7" stroke="#2b3f9a" stroke-width="1.2"/></svg>
<svg style="position:absolute;left:73px;top:624px;overflow:visible;" width="9" height="9" viewBox="0 0 9 9"><rect x="0.5" y="0.5" width="8" height="8" rx="1" fill="url(#pbg)" stroke="#8e8e8e"/><path d="M2 4.5 H7" stroke="#2b3f9a" stroke-width="1.2"/><path d="M4.5 2 V7" stroke="#2b3f9a" stroke-width="1.2"/></svg>
<svg style="position:absolute;left:60px;top:644px;overflow:visible;" width="9" height="9" viewBox="0 0 9 9"><rect x="0.5" y="0.5" width="8" height="8" rx="1" fill="url(#pbg)" stroke="#8e8e8e"/><path d="M2 4.5 H7" stroke="#2b3f9a" stroke-width="1.2"/><path d="M4.5 2 V7" stroke="#2b3f9a" stroke-width="1.2"/></svg>
<svg style="position:absolute;left:60px;top:664px;overflow:visible;" width="9" height="9" viewBox="0 0 9 9"><rect x="0.5" y="0.5" width="8" height="8" rx="1" fill="url(#pbg)" stroke="#8e8e8e"/><path d="M2 4.5 H7" stroke="#2b3f9a" stroke-width="1.2"/><path d="M4.5 2 V7" stroke="#2b3f9a" stroke-width="1.2"/></svg>
<svg style="position:absolute;left:60px;top:684px;overflow:visible;" width="9" height="9" viewBox="0 0 9 9"><rect x="0.5" y="0.5" width="8" height="8" rx="1" fill="url(#pbg)" stroke="#8e8e8e"/><path d="M2 4.5 H7" stroke="#2b3f9a" stroke-width="1.2"/><path d="M4.5 2 V7" stroke="#2b3f9a" stroke-width="1.2"/></svg>
<svg style="position:absolute;left:60px;top:704px;overflow:visible;" width="9" height="9" viewBox="0 0 9 9"><rect x="0.5" y="0.5" width="8" height="8" rx="1" fill="url(#pbg)" stroke="#8e8e8e"/><path d="M2 4.5 H7" stroke="#2b3f9a" stroke-width="1.2"/><path d="M4.5 2 V7" stroke="#2b3f9a" stroke-width="1.2"/></svg>
<svg style="position:absolute;left:60px;top:724px;overflow:visible;" width="9" height="9" viewBox="0 0 9 9"><rect x="0.5" y="0.5" width="8" height="8" rx="1" fill="url(#pbg)" stroke="#8e8e8e"/><path d="M2 4.5 H7" stroke="#2b3f9a" stroke-width="1.2"/><path d="M4.5 2 V7" stroke="#2b3f9a" stroke-width="1.2"/></svg>
<svg style="position:absolute;left:60px;top:744px;overflow:visible;" width="9" height="9" viewBox="0 0 9 9"><rect x="0.5" y="0.5" width="8" height="8" rx="1" fill="url(#pbg)" stroke="#8e8e8e"/><path d="M2 4.5 H7" stroke="#2b3f9a" stroke-width="1.2"/><path d="M4.5 2 V7" stroke="#2b3f9a" stroke-width="1.2"/></svg>
<svg style="position:absolute;left:60px;top:764px;overflow:visible;" width="9" height="9" viewBox="0 0 9 9"><rect x="0.5" y="0.5" width="8" height="8" rx="1" fill="url(#pbg)" stroke="#8e8e8e"/><path d="M2 4.5 H7" stroke="#2b3f9a" stroke-width="1.2"/><path d="M4.5 2 V7" stroke="#2b3f9a" stroke-width="1.2"/></svg>
<svg style="position:absolute;left:60px;top:784px;overflow:visible;" width="9" height="9" viewBox="0 0 9 9"><rect x="0.5" y="0.5" width="8" height="8" rx="1" fill="url(#pbg)" stroke="#8e8e8e"/><path d="M2 4.5 H7" stroke="#2b3f9a" stroke-width="1.2"/><path d="M4.5 2 V7" stroke="#2b3f9a" stroke-width="1.2"/></svg>
<svg style="position:absolute;left:60px;top:804px;overflow:visible;" width="9" height="9" viewBox="0 0 9 9"><rect x="0.5" y="0.5" width="8" height="8" rx="1" fill="url(#pbg)" stroke="#8e8e8e"/><path d="M2 4.5 H7" stroke="#2b3f9a" stroke-width="1.2"/><path d="M4.5 2 V7" stroke="#2b3f9a" stroke-width="1.2"/></svg>
<svg style="position:absolute;left:60px;top:824px;overflow:visible;" width="9" height="9" viewBox="0 0 9 9"><rect x="0.5" y="0.5" width="8" height="8" rx="1" fill="url(#pbg)" stroke="#8e8e8e"/><path d="M2 4.5 H7" stroke="#2b3f9a" stroke-width="1.2"/><path d="M4.5 2 V7" stroke="#2b3f9a" stroke-width="1.2"/></svg>
<svg style="position:absolute;left:230px;top:460px;overflow:visible;" width="19" height="17" viewBox="0 0 19 17"><path d="M0.5 16.5 V8.5 C0.5 3.5 3.5 0.5 8 0.5 C10.5 0.5 12.5 1.5 13.5 3 C15 3.5 16 5 15.8 6.5 L14.6 8.5 V16.5Z" fill="#000"/><ellipse cx="7.6" cy="9.9" rx="4.4" ry="5.6" fill="#dde0e8"/><path d="M5.3 6.3 H9.8 L7.3 13.6" fill="none" stroke="#000" stroke-width="1.9"/><rect x="15" y="15" width="3.5" height="1.8" fill="#000"/></svg>
<div class="" style="left:32px;top:479px;width:1157px;height:2px;background:#000;"></div>
<div class="" style="left:32px;top:497px;width:1157px;height:2px;background:#000;"></div>
<div class="" style="left:1042px;top:480px;width:97px;height:17px;border:1px solid #2f7fd8;background:transparent;"></div>
<div class="" style="left:1056px;top:437px;width:134px;height:204px;border:2px solid #8b0000;box-shadow:inset 1px 1px 3px rgba(0,0,0,0.25),1px 1px 3px rgba(0,0,0,0.25);"></div>
<div style="left:62.5px;top:437px;width:27px;height:26px;border-radius:50%;border:3px solid #8b0000;box-shadow:1px 2px 3px rgba(0,0,0,0.35);"></div>
<div style="left:301.6px;top:234.70000000000002px;width:29.4px;height:29.4px;border-radius:50%;background:#8b0000;box-shadow:1px 2px 3px rgba(0,0,0,0.3);"></div>
<svg style="position:absolute;left:311.3px;top:242.9px;overflow:visible;" width="10" height="13" viewBox="0 0 10 13"><path d="M2.2 3.2 L5.6 0.8 V12.2" fill="none" stroke="#fff" stroke-width="1.9"/></svg>
<div style="left:38.7px;top:412.6px;width:29.4px;height:29.4px;border-radius:50%;background:#8b0000;box-shadow:1px 2px 3px rgba(0,0,0,0.3);"></div>
<div class="t" style="left:-146.6px;width:400px;top:416.8px;font-size:16px;font-weight:400;color:#fff;line-height:20px;text-align:center;">2</div>
<div style="left:1054.8999999999999px;top:472.8px;width:29.4px;height:29.4px;border-radius:50%;background:#8b0000;box-shadow:1px 2px 3px rgba(0,0,0,0.3);"></div>
<div class="t" style="left:869.5999999999999px;width:400px;top:477.0px;font-size:16px;font-weight:400;color:#fff;line-height:20px;text-align:center;">3</div>
<div style="left:1177.0px;top:475.8px;width:29.4px;height:29.4px;border-radius:50%;background:#8b0000;box-shadow:1px 2px 3px rgba(0,0,0,0.3);"></div>
<div class="t" style="left:991.7px;width:400px;top:480.0px;font-size:16px;font-weight:400;color:#fff;line-height:20px;text-align:center;">4</div>
<div style="left:807.3px;top:473.7px;width:29.4px;height:29.4px;border-radius:50%;background:#8b0000;box-shadow:1px 2px 3px rgba(0,0,0,0.3);"></div>
<div class="t" style="left:622px;width:400px;top:477.9px;font-size:16px;font-weight:400;color:#fff;line-height:20px;text-align:center;">5</div>
</body></html>
